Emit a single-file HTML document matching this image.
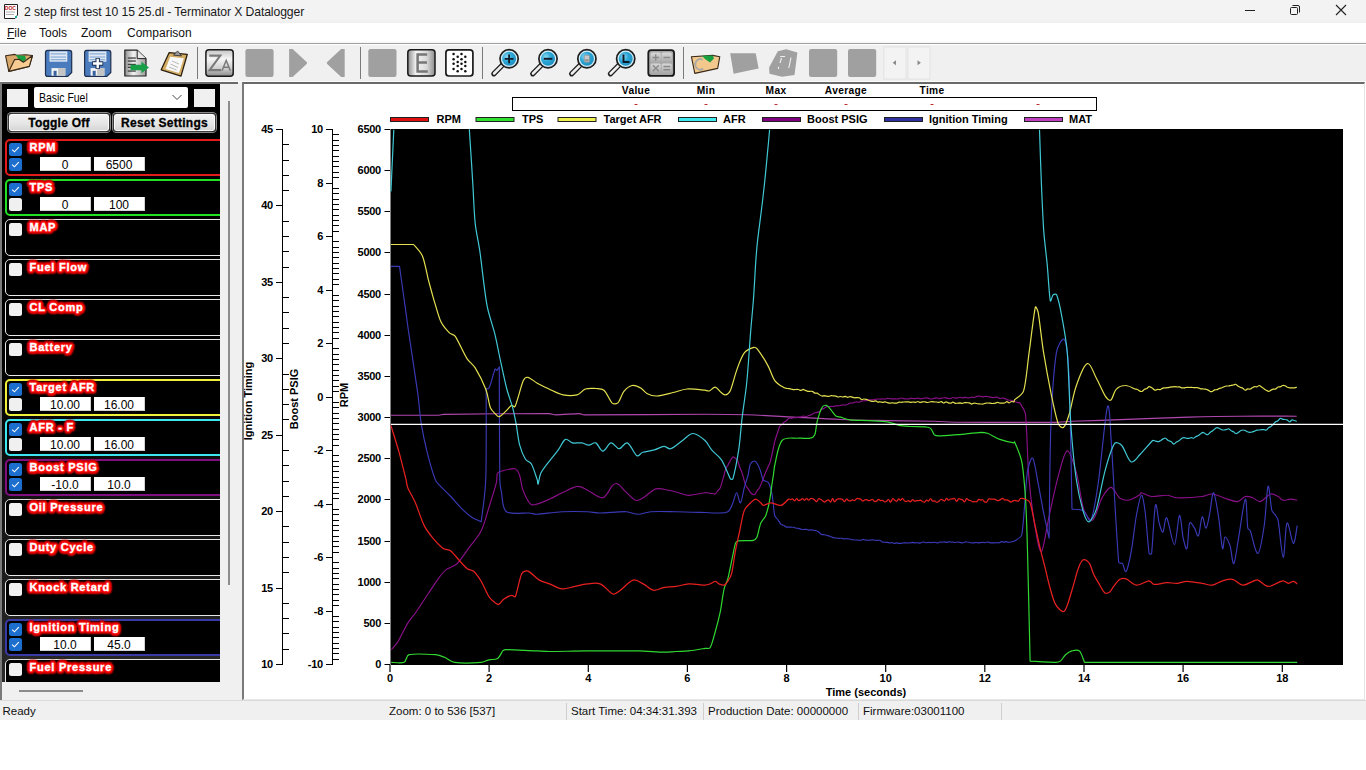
<!DOCTYPE html>
<html><head><meta charset="utf-8">
<style>
*{margin:0;padding:0;box-sizing:border-box}
html,body{width:1366px;height:770px;overflow:hidden;background:#fff;font-family:"Liberation Sans",sans-serif;}
.abs{position:absolute}
#title{position:absolute;left:0;top:0;width:1366px;height:23px;background:linear-gradient(#f3f3f3 80%,#efefef)}
#title .t{position:absolute;left:24px;top:5px;font-size:12.2px;color:#1a1a1a;letter-spacing:-0.1px;white-space:nowrap}
#menu{position:absolute;left:0;top:23px;width:1366px;height:20px;background:linear-gradient(#fff 88%,#f6f6f6)}
#menu span{position:absolute;top:3px;font-size:12px;color:#111}
#tb{position:absolute;left:0;top:43px;width:1366px;height:39px;background:#f0f0f0;border-top:1px solid #a0a0a0;border-bottom:1px solid #fbfbfb;box-shadow:inset 0 1px 0 #fff}
#lp{position:absolute;left:0;top:82px;width:242px;height:618px;background:#f0f0f0}
#lpb{position:absolute;left:0;top:0;width:238px;height:618px;border-top:2px solid #6a6a6a;border-left:2px solid #7a7a7a}
#blk{position:absolute;left:2px;top:2px;width:218px;height:598px;background:linear-gradient(#000 0%,#000 45%,#2a2a2a 100%);overflow:hidden}
.grp{position:absolute;left:5px;width:240px;height:37px;border-radius:5px;background:#000}
.cb{position:absolute;width:13px;height:13px;border-radius:2.5px;background:#f0f0f0}
.cb.on{background:#1c6fcf}
.cb svg{position:absolute;left:0;top:0}
.lbl{position:absolute;left:27.5px;font-weight:bold;font-size:11px;letter-spacing:0.75px;color:#fff;white-space:nowrap;padding:1px 2px;-webkit-text-stroke:0.35px #fff;text-shadow:1.20px 0.00px 0.6px #ff1010,1.04px 0.60px 0.6px #ff1010,0.60px 1.04px 0.6px #ff1010,0.00px 1.20px 0.6px #ff1010,-0.60px 1.04px 0.6px #ff1010,-1.04px 0.60px 0.6px #ff1010,-1.20px 0.00px 0.6px #ff1010,-1.04px -0.60px 0.6px #ff1010,-0.60px -1.04px 0.6px #ff1010,-0.00px -1.20px 0.6px #ff1010,0.60px -1.04px 0.6px #ff1010,1.04px -0.60px 0.6px #ff1010,2.20px 0.00px 1px #e80000,1.91px 1.10px 1px #e80000,1.10px 1.91px 1px #e80000,0.00px 2.20px 1px #e80000,-1.10px 1.91px 1px #e80000,-1.91px 1.10px 1px #e80000,-2.20px 0.00px 1px #e80000,-1.91px -1.10px 1px #e80000,-1.10px -1.91px 1px #e80000,-0.00px -2.20px 1px #e80000,1.10px -1.91px 1px #e80000,1.91px -1.10px 1px #e80000,3.00px 0.00px 1.5px #c00000,2.60px 1.50px 1.5px #c00000,1.50px 2.60px 1.5px #c00000,0.00px 3.00px 1.5px #c00000,-1.50px 2.60px 1.5px #c00000,-2.60px 1.50px 1.5px #c00000,-3.00px 0.00px 1.5px #c00000,-2.60px -1.50px 1.5px #c00000,-1.50px -2.60px 1.5px #c00000,-0.00px -3.00px 1.5px #c00000,1.50px -2.60px 1.5px #c00000,2.60px -1.50px 1.5px #c00000}
.inp{position:absolute;width:51px;height:14.5px;background:#fff;font-size:12px;text-align:center;line-height:17px;color:#000;
  border-bottom:1px solid #d0d0d0;border-right:1px solid #d0d0d0}
#cp{position:absolute;left:242px;top:82px;width:1123px;height:618px;background:#fff;border-top:2px solid #6a6a6a;border-left:2px solid #7a7a7a;border-right:1px solid #e4e4e4;border-bottom:1px solid #e8e8e8}
#status{position:absolute;left:0;top:700px;width:1366px;height:20px;background:#f0f0f0;border-top:1px solid #dadada}
#status span{position:absolute;top:4.2px;font-size:11.5px;color:#111;white-space:nowrap}
#status i{position:absolute;top:2px;width:1px;height:17px;background:#cfcfcf}
.btn{position:absolute;height:19px;border:1px solid #3a3a3a;border-radius:3.5px;background:linear-gradient(#f4f4f4,#e4e4e4 60%,#d4d4d4);
  font-weight:bold;font-size:12px;letter-spacing:0.25px;-webkit-text-stroke:0.3px #000;text-align:center;line-height:19px;color:#000;box-shadow:0 0 0 1px #8a8a8a,inset 0 0 0 1px #fafafa}
</style></head><body>
<div id="title">
 <svg class="abs" style="left:2px;top:3px" width="17" height="17" viewBox="0 0 17 17">
  <path d="M2.5 1.5 H15.5 V12 L13 15.5 H2.5 Z" fill="#fff" stroke="#222" stroke-width="1"/>
  <path d="M4 9 H13 M4 11.5 H12" stroke="#999" stroke-width="0.8"/>
  <text x="2.8" y="6.5" font-family="Liberation Sans" font-size="5" font-weight="bold" fill="#c01818">DOC</text>
  <rect x="13" y="13" width="2" height="2" fill="#2a9"/>
 </svg>
 <div class="t">2 step first test 10 15 25.dl - Terminator X Datalogger</div>
 <svg class="abs" style="left:1244px;top:4px" width="12" height="12"><path d="M1 6.5 H11" stroke="#222" stroke-width="1"/></svg>
 <svg class="abs" style="left:1289px;top:4px" width="12" height="12"><path d="M3.5 1.5 H9 Q10.5 1.5 10.5 3 V8.5" fill="none" stroke="#222"/><rect x="1.5" y="3.5" width="7" height="7" rx="1" fill="none" stroke="#222"/></svg>
 <svg class="abs" style="left:1335px;top:4px" width="12" height="12"><path d="M1 1 L11 11 M11 1 L1 11" stroke="#222" stroke-width="1.1"/></svg>
</div>
<div id="menu">
 <span style="left:7px"><u>F</u>ile</span><span style="left:39px">Tools</span><span style="left:81px">Zoom</span><span style="left:127px">Comparison</span>
</div>
<div id="tb"></div>
<div id="lp">
 <div id="lpb"></div>
 <div id="blk">
  <div class="abs" style="left:5px;top:5px;width:21px;height:18px;background:#f0f0f0"></div>
  <div class="abs" style="left:32px;top:3px;width:154px;height:21px;background:#fff;border-radius:2px">
    <span class="abs" style="left:4.5px;top:4px;font-size:12px;color:#000;transform:scaleX(0.87);transform-origin:0 0;white-space:nowrap">Basic Fuel</span>
    <svg class="abs" style="left:138px;top:7px" width="10" height="7"><path d="M0.5 1 L5 5.5 L9.5 1" fill="none" stroke="#444" stroke-width="1"/></svg>
  </div>
  <div class="abs" style="left:192px;top:5px;width:21px;height:18px;background:#f0f0f0"></div>
  <div class="btn" style="left:6px;top:28.5px;width:102px">Toggle Off</div>
  <div class="btn" style="left:111px;top:28.5px;width:103px">Reset Settings</div>
  <div class="abs" style="left:0;top:0;width:218px;height:598px;">
   <div class="abs" style="left:-2px;top:-84px;width:240px;height:700px">
   <div class="grp" style="top:139px;border:2px solid #e41b1b;"></div>
<div class="cb on" style="left:9px;top:143.2px"><svg width="13" height="13" viewBox="0 0 13 13"><path d="M3.2 6.6 L5.4 8.8 L9.8 4.2" fill="none" stroke="#fff" stroke-width="1.1"/></svg></div>
<div class="cb on" style="left:9px;top:157.6px"><svg width="13" height="13" viewBox="0 0 13 13"><path d="M3.2 6.6 L5.4 8.8 L9.8 4.2" fill="none" stroke="#fff" stroke-width="1.1"/></svg></div>
<div class="lbl" style="top:139.5px">RPM</div>
<div class="inp" style="left:40px;top:156.5px">0</div>
<div class="inp" style="left:94px;top:156.5px">6500</div>
<div class="grp" style="top:179px;border:2px solid #22e022;"></div>
<div class="cb on" style="left:9px;top:183.2px"><svg width="13" height="13" viewBox="0 0 13 13"><path d="M3.2 6.6 L5.4 8.8 L9.8 4.2" fill="none" stroke="#fff" stroke-width="1.1"/></svg></div>
<div class="cb" style="left:9px;top:197.6px"></div>
<div class="lbl" style="top:179.5px">TPS</div>
<div class="inp" style="left:40px;top:196.5px">0</div>
<div class="inp" style="left:94px;top:196.5px">100</div>
<div class="grp" style="top:219px;border:1px solid #e8e8e8;"></div>
<div class="cb" style="left:9px;top:223.2px"></div>
<div class="lbl" style="top:219.5px">MAP</div>
<div class="grp" style="top:259px;border:1px solid #e8e8e8;"></div>
<div class="cb" style="left:9px;top:263.2px"></div>
<div class="lbl" style="top:259.5px">Fuel Flow</div>
<div class="grp" style="top:299px;border:1px solid #e8e8e8;"></div>
<div class="cb" style="left:9px;top:303.2px"></div>
<div class="lbl" style="top:299.5px">CL Comp</div>
<div class="grp" style="top:339px;border:1px solid #e8e8e8;"></div>
<div class="cb" style="left:9px;top:343.2px"></div>
<div class="lbl" style="top:339.5px">Battery</div>
<div class="grp" style="top:379px;border:2px solid #f2ef3a;"></div>
<div class="cb on" style="left:9px;top:383.2px"><svg width="13" height="13" viewBox="0 0 13 13"><path d="M3.2 6.6 L5.4 8.8 L9.8 4.2" fill="none" stroke="#fff" stroke-width="1.1"/></svg></div>
<div class="cb" style="left:9px;top:397.6px"></div>
<div class="lbl" style="top:379.5px">Target AFR</div>
<div class="inp" style="left:40px;top:396.5px">10.00</div>
<div class="inp" style="left:94px;top:396.5px">16.00</div>
<div class="grp" style="top:419px;border:2px solid #3ee6f0;"></div>
<div class="cb on" style="left:9px;top:423.2px"><svg width="13" height="13" viewBox="0 0 13 13"><path d="M3.2 6.6 L5.4 8.8 L9.8 4.2" fill="none" stroke="#fff" stroke-width="1.1"/></svg></div>
<div class="cb" style="left:9px;top:437.6px"></div>
<div class="lbl" style="top:419.5px">AFR - F</div>
<div class="inp" style="left:40px;top:436.5px">10.00</div>
<div class="inp" style="left:94px;top:436.5px">16.00</div>
<div class="grp" style="top:459px;border:2px solid #801080;"></div>
<div class="cb on" style="left:9px;top:463.2px"><svg width="13" height="13" viewBox="0 0 13 13"><path d="M3.2 6.6 L5.4 8.8 L9.8 4.2" fill="none" stroke="#fff" stroke-width="1.1"/></svg></div>
<div class="cb on" style="left:9px;top:477.6px"><svg width="13" height="13" viewBox="0 0 13 13"><path d="M3.2 6.6 L5.4 8.8 L9.8 4.2" fill="none" stroke="#fff" stroke-width="1.1"/></svg></div>
<div class="lbl" style="top:459.5px">Boost PSIG</div>
<div class="inp" style="left:40px;top:476.5px">-10.0</div>
<div class="inp" style="left:94px;top:476.5px">10.0</div>
<div class="grp" style="top:499px;border:1px solid #e8e8e8;"></div>
<div class="cb" style="left:9px;top:503.2px"></div>
<div class="lbl" style="top:499.5px">Oil Pressure</div>
<div class="grp" style="top:539px;border:1px solid #e8e8e8;"></div>
<div class="cb" style="left:9px;top:543.2px"></div>
<div class="lbl" style="top:539.5px">Duty Cycle</div>
<div class="grp" style="top:579px;border:1px solid #e8e8e8;"></div>
<div class="cb" style="left:9px;top:583.2px"></div>
<div class="lbl" style="top:579.5px">Knock Retard</div>
<div class="grp" style="top:619px;border:2px solid #3a3aa6;"></div>
<div class="cb on" style="left:9px;top:623.2px"><svg width="13" height="13" viewBox="0 0 13 13"><path d="M3.2 6.6 L5.4 8.8 L9.8 4.2" fill="none" stroke="#fff" stroke-width="1.1"/></svg></div>
<div class="cb on" style="left:9px;top:637.6px"><svg width="13" height="13" viewBox="0 0 13 13"><path d="M3.2 6.6 L5.4 8.8 L9.8 4.2" fill="none" stroke="#fff" stroke-width="1.1"/></svg></div>
<div class="lbl" style="top:619.5px">Ignition Timing</div>
<div class="inp" style="left:40px;top:636.5px">10.0</div>
<div class="inp" style="left:94px;top:636.5px">45.0</div>
<div class="grp" style="top:659px;border:1px solid #e8e8e8;"></div>
<div class="cb" style="left:9px;top:663.2px"></div>
<div class="lbl" style="top:659.5px">Fuel Pressure</div>
   </div>
  </div>
 </div>
 <div class="abs" style="left:228px;top:19px;width:2px;height:484px;background:#8c8c8c"></div>
 <div class="abs" style="left:19px;top:608px;width:64px;height:2px;background:#8c8c8c"></div>
</div>
<div id="cp"></div>
<svg class="abs" style="left:0;top:0" width="1366" height="83" viewBox="0 0 1366 83">
<defs>
<linearGradient id="gZA" x1="0" y1="0" x2="0" y2="1"><stop offset="0" stop-color="#c4c4c4"/><stop offset="0.35" stop-color="#f6f6f6"/><stop offset="0.7" stop-color="#d0d0d0"/><stop offset="1" stop-color="#8a8a8a"/></linearGradient>
<linearGradient id="gE" x1="0" y1="0" x2="1" y2="0"><stop offset="0" stop-color="#8c8c8c"/><stop offset="0.3" stop-color="#f4f4f4"/><stop offset="0.7" stop-color="#d8d8d8"/><stop offset="1" stop-color="#8c8c8c"/></linearGradient>
<linearGradient id="gDoc" x1="0" y1="0" x2="1" y2="0"><stop offset="0" stop-color="#8a8a8a"/><stop offset="0.4" stop-color="#f2f2f2"/><stop offset="1" stop-color="#9a9a9a"/></linearGradient>
<radialGradient id="gLens" cx="0.35" cy="0.35" r="0.7"><stop offset="0" stop-color="#8fd8f0"/><stop offset="0.5" stop-color="#2aa6d6"/><stop offset="1" stop-color="#1d8fc0"/></radialGradient>
<linearGradient id="gCalc" x1="0" y1="0" x2="0" y2="1"><stop offset="0" stop-color="#d8d8d8"/><stop offset="1" stop-color="#a8a8a8"/></linearGradient>
</defs>
<rect x="197.0" y="47" width="1" height="32" fill="#7a7a7a"/>
<rect x="360.0" y="47" width="1" height="32" fill="#7a7a7a"/>
<rect x="482.0" y="47" width="1" height="32" fill="#7a7a7a"/>
<rect x="683.0" y="47" width="1" height="32" fill="#7a7a7a"/>
<path d="M5.6 55.8 L14.9 54.4 L16.7 55.2 L25.8 54.7 L32.5 55.5 L29.3 66.4 L8.8 71.4 Z" fill="#d9a86c" stroke="#3a2a18" stroke-width="1.1" stroke-linejoin="round"/>
<path d="M15.8 55 L25.2 56.1 L26 59 L23.4 62.3 L18.7 59.6 Z" fill="#18a040"/>
<path d="M8.8 71.4 L14.6 59.6 L19 59.2 L23.4 62.3 L32.5 55.5 L29.3 66.4 Z" fill="#f6cc92" stroke="#3a2a18" stroke-width="1.1" stroke-linejoin="round"/>
<path d="M47.6 50.3 H69.4 Q71.7 50.3 71.7 52.6 V72.5 L67.7 76.4 H47.6 Q45.5 76.4 45.5 74.2 V52.6 Q45.5 50.3 47.6 50.3 Z" fill="#4a7bbd" stroke="#1e2f4e" stroke-width="1.2"/>
<rect x="49.5" y="51.4" width="17.8" height="10.3" fill="#dfe9f4"/>
<rect x="50.6" y="53.199999999999996" width="15.5" height="1.3" fill="#8fb0d8"/>
<rect x="50.6" y="56.4" width="15.5" height="1.3" fill="#8fb0d8"/>
<rect x="50.6" y="59.0" width="15.5" height="1.3" fill="#8fb0d8"/>
<rect x="51.5" y="68.1" width="13.8" height="7.6" fill="#f4f4f4"/>
<rect x="58.1" y="68.1" width="7.2" height="7.6" fill="#c4c4c4"/>
<rect x="53.6" y="70.8" width="3" height="5" fill="#3a62a0"/>
<path d="M86.7 50.3 H108.5 Q110.80000000000001 50.3 110.80000000000001 52.6 V72.5 L106.80000000000001 76.4 H86.7 Q84.60000000000001 76.4 84.60000000000001 74.2 V52.6 Q84.60000000000001 50.3 86.7 50.3 Z" fill="#4a7bbd" stroke="#1e2f4e" stroke-width="1.2"/>
<rect x="88.60000000000001" y="51.4" width="17.8" height="10.3" fill="#dfe9f4"/>
<rect x="89.7" y="53.199999999999996" width="15.5" height="1.3" fill="#8fb0d8"/>
<rect x="89.7" y="56.4" width="15.5" height="1.3" fill="#8fb0d8"/>
<rect x="89.7" y="59.0" width="15.5" height="1.3" fill="#8fb0d8"/>
<rect x="90.60000000000001" y="68.1" width="13.8" height="7.6" fill="#f4f4f4"/>
<rect x="97.2" y="68.1" width="7.2" height="7.6" fill="#c4c4c4"/>
<rect x="92.7" y="70.8" width="3" height="5" fill="#3a62a0"/>
<path d="M92.2 63.5 H103.2 M97.7 58.0 V69.0" stroke="#1e2f4e" stroke-width="4.4"/>
<path d="M93.0 63.5 H102.4 M97.7 58.8 V68.2" stroke="#fff" stroke-width="2.4"/>
<path d="M124.8 50.2 H137.2 L146 58.6 V76 H124.8 Z" fill="url(#gDoc)" stroke="#222" stroke-width="1.2" stroke-linejoin="round"/>
<path d="M137.2 50.2 V58.6 H146" fill="#e8e8e8" stroke="#222" stroke-width="1"/>
<rect x="127.8" y="57.4" width="8" height="1.3" fill="#404040"/>
<rect x="127.8" y="60.4" width="8" height="1.3" fill="#404040"/>
<rect x="127.8" y="63.800000000000004" width="8" height="1.3" fill="#404040"/>
<rect x="127.8" y="66.7" width="8" height="1.3" fill="#404040"/>
<rect x="127.8" y="70.4" width="8" height="1.3" fill="#404040"/>
<path d="M130.5 64.8 H141.4 V61.8 L149 67.5 L141.4 73.2 V70.3 H130.5 Z" fill="#18a048"/>
<path d="M169.2 52.6 L187.3 54.3 L181 76.1 L161.2 69.8 Z" fill="#d4ac64" stroke="#2a2010" stroke-width="1.3" stroke-linejoin="round"/>
<path d="M170.2 56.8 L183.8 58.3 L179 73 L165.6 69 Z" fill="#f8f8f8"/>
<path d="M172 61 L179 64 M170.5 64 L178 67.5 M169 67 L176.5 70" stroke="#b8b8b8" stroke-width="1"/>
<path d="M173.5 55.2 L177.6 50.9 L181.5 55.9 Z" fill="#9a9a9a" stroke="#2a2a2a" stroke-width="0.8"/>
<rect x="205.9" y="49.7" width="27.3" height="26.5" rx="3" fill="url(#gZA)" stroke="#1a1a1a" stroke-width="1.5"/>
<path d="M209.3 55.6 H220.3 L209.6 70.1 H221" fill="none" stroke="#7a7a7a" stroke-width="2.1" stroke-linejoin="miter"/>
<path d="M222 70.8 L226.2 60.5 L230.4 70.8 M223.6 67.2 H228.8" fill="none" stroke="#7a7a7a" stroke-width="1.5"/>
<rect x="245.4" y="49.1" width="28.2" height="27.8" rx="2.2" fill="#a0a0a0"/>
<rect x="368.3" y="49.1" width="28.2" height="27.8" rx="2.2" fill="#a0a0a0"/>
<rect x="809" y="49.1" width="28.2" height="27.8" rx="2.2" fill="#a0a0a0"/>
<rect x="848" y="49.1" width="28.2" height="27.8" rx="2.2" fill="#a0a0a0"/>
<path d="M289.1 49.1 H292.6 L306.9 62.3 V63.7 L292.6 76.9 H289.1 Z" fill="#a0a0a0"/>
<path d="M344.7 49.1 H341.2 L326.9 62.3 V63.7 L341.2 76.9 H344.7 Z" fill="#a0a0a0"/>
<rect x="407.8" y="49.8" width="27.2" height="26.2" rx="3" fill="url(#gE)" stroke="#1a1a1a" stroke-width="1.5"/>
<path d="M427.2 54.6 H417.6 V71.6 H427.8 M417.6 62.4 H427" fill="none" stroke="#777" stroke-width="2.5"/>
<rect x="445.9" y="49.8" width="27" height="26.2" rx="3" fill="#fff" stroke="#1a1a1a" stroke-width="1.7"/>
<circle cx="453.59" cy="54.08" r="1.25" fill="#111"/>
<circle cx="461.49" cy="54.08" r="1.25" fill="#111"/>
<circle cx="457.69" cy="56.71" r="1.25" fill="#111"/>
<circle cx="465.30" cy="56.71" r="1.25" fill="#111"/>
<circle cx="453.59" cy="59.35" r="1.25" fill="#111"/>
<circle cx="461.49" cy="59.35" r="1.25" fill="#111"/>
<circle cx="457.69" cy="61.98" r="1.25" fill="#111"/>
<circle cx="465.30" cy="61.98" r="1.25" fill="#111"/>
<circle cx="453.59" cy="63.74" r="1.25" fill="#111"/>
<circle cx="461.49" cy="63.74" r="1.25" fill="#111"/>
<circle cx="457.69" cy="66.08" r="1.25" fill="#111"/>
<circle cx="465.30" cy="66.08" r="1.25" fill="#111"/>
<circle cx="453.59" cy="69.01" r="1.25" fill="#111"/>
<circle cx="461.49" cy="69.01" r="1.25" fill="#111"/>
<circle cx="457.69" cy="71.35" r="1.25" fill="#111"/>
<circle cx="465.30" cy="71.35" r="1.25" fill="#111"/>
<path d="M502.5 65.0 L493.8 73.8" stroke="#1e1e1e" stroke-width="5.2" stroke-linecap="round"/>
<path d="M502.20000000000005 65.3 L494.1 73.5" stroke="#f0f0f0" stroke-width="2.6" stroke-linecap="round"/>
<circle cx="509.1" cy="58.8" r="9.1" fill="#d6eef8" stroke="#1e1e1e" stroke-width="1.7"/>
<circle cx="509.1" cy="58.8" r="7" fill="url(#gLens)"/>
<path d="M504.70000000000005 58.8 H513.5 M509.1 54.599999999999994 V63.199999999999996" stroke="#0e1a28" stroke-width="1.8"/>
<path d="M541.4 65.0 L532.7 73.8" stroke="#1e1e1e" stroke-width="5.2" stroke-linecap="round"/>
<path d="M541.1 65.3 L533 73.5" stroke="#f0f0f0" stroke-width="2.6" stroke-linecap="round"/>
<circle cx="548" cy="58.8" r="9.1" fill="#d6eef8" stroke="#1e1e1e" stroke-width="1.7"/>
<circle cx="548" cy="58.8" r="7" fill="url(#gLens)"/>
<path d="M543.8 58.8 H552.4" stroke="#0e1a28" stroke-width="1.9"/>
<path d="M580.3 65.0 L571.6 73.8" stroke="#1e1e1e" stroke-width="5.2" stroke-linecap="round"/>
<path d="M580.0 65.3 L571.9 73.5" stroke="#f0f0f0" stroke-width="2.6" stroke-linecap="round"/>
<circle cx="586.9" cy="58.8" r="9.1" fill="#d6eef8" stroke="#1e1e1e" stroke-width="1.7"/>
<circle cx="586.9" cy="58.8" r="7" fill="url(#gLens)"/>
<rect x="584.3" y="55.199999999999996" width="5.2" height="7" rx="1" fill="#c8c8c8" stroke="#888" stroke-width="0.6"/>
<rect x="585.1" y="59.3" width="3.6" height="2" fill="#909090"/>
<path d="M619.1 65.0 L610.4000000000001 73.8" stroke="#1e1e1e" stroke-width="5.2" stroke-linecap="round"/>
<path d="M618.8000000000001 65.3 L610.7 73.5" stroke="#f0f0f0" stroke-width="2.6" stroke-linecap="round"/>
<circle cx="625.7" cy="58.8" r="9.1" fill="#d6eef8" stroke="#1e1e1e" stroke-width="1.7"/>
<circle cx="625.7" cy="58.8" r="7" fill="url(#gLens)"/>
<path d="M623.5 54.4 V62.0 H629.5" fill="none" stroke="#0e1a28" stroke-width="1.9"/>
<rect x="648.3" y="50.1" width="25.8" height="25.8" rx="3" fill="#a8a8a8" stroke="#1a1a1a" stroke-width="1.8"/>
<rect x="650.6" y="52.4" width="10.2" height="10.2" rx="1.6" fill="url(#gCalc)"/>
<rect x="661.6" y="52.4" width="10.2" height="10.2" rx="1.6" fill="url(#gCalc)"/>
<rect x="650.6" y="63.4" width="10.2" height="10.2" rx="1.6" fill="url(#gCalc)"/>
<rect x="661.6" y="63.4" width="10.2" height="10.2" rx="1.6" fill="url(#gCalc)"/>
<path d="M652.5 57.5 H659 M655.7 54.3 V60.7 M663.5 57.5 H670.2 M652.8 65.3 L658.8 71.3 M658.8 65.3 L652.8 71.3 M663.5 66.5 H670.2 M663.5 69.8 H670.2" stroke="#8a8a8a" stroke-width="1.4"/>
<path d="M691.4 56.7 L712.7 55.4 L719.8 56.7 L717.7 68.4 L694.8 73.4 Z" fill="#f2c88c" stroke="#3a2a18" stroke-width="1.1" stroke-linejoin="round"/>
<path d="M702 55.8 L712.7 55.4 L714 58.5 L710 62.5 L705 59 Z" fill="#18a040"/>
<path d="M702.5 59.8 A4.6 5.4 0 1 0 703 68.5" fill="none" stroke="#a8a8a8" stroke-width="1.8"/>
<path d="M730.2 53.3 L755.7 53.3 L758.6 68.4 L733.6 73.8 Z" fill="#a0a0a0"/>
<path d="M777.8 51.3 L786.2 49.2 L797.4 52.5 L794.5 75 L782 76.7 L769.5 73.8 L769.1 67.5 Z" fill="#a0a0a0"/>
<path d="M780.3 56.5 H785 M791 57.5 L788.8 68 M778.5 66.8 V69 M781.5 58 L780 63" stroke="#f0f0f0" stroke-width="1.1"/>
<rect x="883.8" y="46.9" width="22.2" height="32.2" fill="#f3f3f3" stroke="#e2e2e2" stroke-width="1"/>
<rect x="907.8" y="46.9" width="22.2" height="32.2" fill="#f3f3f3" stroke="#e2e2e2" stroke-width="1"/>
<path d="M896 60.2 V65.2 L892.6 62.7 Z" fill="#8a8a8a"/>
<path d="M917.5 60.2 V65.2 L920.9 62.7 Z" fill="#8a8a8a"/>
</svg>
<svg class="abs" style="left:244px;top:84px" width="1119" height="616" viewBox="244 84 1119 616">
<rect x="390.5" y="129" width="952.5" height="536" fill="#000"/>
<line x1="282.5" y1="129" x2="282.5" y2="665" stroke="#000" stroke-width="1"/>
<line x1="276" y1="664.5" x2="282.5" y2="664.5" stroke="#000" stroke-width="1"/>
<text x="273" y="667.7" text-anchor="end" letter-spacing="-0.25" font-family="Liberation Sans" font-weight="bold" font-size="11" fill="#000">10</text>
<line x1="282.5" y1="649.5" x2="289" y2="649.5" stroke="#000" stroke-width="1"/>
<line x1="282.5" y1="633.5" x2="289" y2="633.5" stroke="#000" stroke-width="1"/>
<line x1="282.5" y1="618.5" x2="289" y2="618.5" stroke="#000" stroke-width="1"/>
<line x1="282.5" y1="603.5" x2="289" y2="603.5" stroke="#000" stroke-width="1"/>
<line x1="276" y1="588.5" x2="282.5" y2="588.5" stroke="#000" stroke-width="1"/>
<text x="273" y="591.7" text-anchor="end" letter-spacing="-0.25" font-family="Liberation Sans" font-weight="bold" font-size="11" fill="#000">15</text>
<line x1="282.5" y1="572.5" x2="289" y2="572.5" stroke="#000" stroke-width="1"/>
<line x1="282.5" y1="557.5" x2="289" y2="557.5" stroke="#000" stroke-width="1"/>
<line x1="282.5" y1="542.5" x2="289" y2="542.5" stroke="#000" stroke-width="1"/>
<line x1="282.5" y1="526.5" x2="289" y2="526.5" stroke="#000" stroke-width="1"/>
<line x1="276" y1="511.5" x2="282.5" y2="511.5" stroke="#000" stroke-width="1"/>
<text x="273" y="514.7" text-anchor="end" letter-spacing="-0.25" font-family="Liberation Sans" font-weight="bold" font-size="11" fill="#000">20</text>
<line x1="282.5" y1="496.5" x2="289" y2="496.5" stroke="#000" stroke-width="1"/>
<line x1="282.5" y1="481.5" x2="289" y2="481.5" stroke="#000" stroke-width="1"/>
<line x1="282.5" y1="465.5" x2="289" y2="465.5" stroke="#000" stroke-width="1"/>
<line x1="282.5" y1="450.5" x2="289" y2="450.5" stroke="#000" stroke-width="1"/>
<line x1="276" y1="435.5" x2="282.5" y2="435.5" stroke="#000" stroke-width="1"/>
<text x="273" y="438.7" text-anchor="end" letter-spacing="-0.25" font-family="Liberation Sans" font-weight="bold" font-size="11" fill="#000">25</text>
<line x1="282.5" y1="419.5" x2="289" y2="419.5" stroke="#000" stroke-width="1"/>
<line x1="282.5" y1="404.5" x2="289" y2="404.5" stroke="#000" stroke-width="1"/>
<line x1="282.5" y1="389.5" x2="289" y2="389.5" stroke="#000" stroke-width="1"/>
<line x1="282.5" y1="374.5" x2="289" y2="374.5" stroke="#000" stroke-width="1"/>
<line x1="276" y1="358.5" x2="282.5" y2="358.5" stroke="#000" stroke-width="1"/>
<text x="273" y="361.7" text-anchor="end" letter-spacing="-0.25" font-family="Liberation Sans" font-weight="bold" font-size="11" fill="#000">30</text>
<line x1="282.5" y1="343.5" x2="289" y2="343.5" stroke="#000" stroke-width="1"/>
<line x1="282.5" y1="328.5" x2="289" y2="328.5" stroke="#000" stroke-width="1"/>
<line x1="282.5" y1="312.5" x2="289" y2="312.5" stroke="#000" stroke-width="1"/>
<line x1="282.5" y1="297.5" x2="289" y2="297.5" stroke="#000" stroke-width="1"/>
<line x1="276" y1="282.5" x2="282.5" y2="282.5" stroke="#000" stroke-width="1"/>
<text x="273" y="285.7" text-anchor="end" letter-spacing="-0.25" font-family="Liberation Sans" font-weight="bold" font-size="11" fill="#000">35</text>
<line x1="282.5" y1="267.5" x2="289" y2="267.5" stroke="#000" stroke-width="1"/>
<line x1="282.5" y1="251.5" x2="289" y2="251.5" stroke="#000" stroke-width="1"/>
<line x1="282.5" y1="236.5" x2="289" y2="236.5" stroke="#000" stroke-width="1"/>
<line x1="282.5" y1="221.5" x2="289" y2="221.5" stroke="#000" stroke-width="1"/>
<line x1="276" y1="205.5" x2="282.5" y2="205.5" stroke="#000" stroke-width="1"/>
<text x="273" y="208.7" text-anchor="end" letter-spacing="-0.25" font-family="Liberation Sans" font-weight="bold" font-size="11" fill="#000">40</text>
<line x1="282.5" y1="190.5" x2="289" y2="190.5" stroke="#000" stroke-width="1"/>
<line x1="282.5" y1="175.5" x2="289" y2="175.5" stroke="#000" stroke-width="1"/>
<line x1="282.5" y1="160.5" x2="289" y2="160.5" stroke="#000" stroke-width="1"/>
<line x1="282.5" y1="144.5" x2="289" y2="144.5" stroke="#000" stroke-width="1"/>
<line x1="276" y1="129.5" x2="282.5" y2="129.5" stroke="#000" stroke-width="1"/>
<text x="273" y="132.7" text-anchor="end" letter-spacing="-0.25" font-family="Liberation Sans" font-weight="bold" font-size="11" fill="#000">45</text>
<line x1="332.5" y1="129" x2="332.5" y2="665" stroke="#000" stroke-width="1"/>
<line x1="326" y1="664.5" x2="332.5" y2="664.5" stroke="#000" stroke-width="1"/>
<text x="323" y="667.7" text-anchor="end" letter-spacing="-0.25" font-family="Liberation Sans" font-weight="bold" font-size="11" fill="#000">-10</text>
<line x1="332.5" y1="659.5" x2="339" y2="659.5" stroke="#000" stroke-width="1"/>
<line x1="332.5" y1="653.5" x2="339" y2="653.5" stroke="#000" stroke-width="1"/>
<line x1="332.5" y1="648.5" x2="339" y2="648.5" stroke="#000" stroke-width="1"/>
<line x1="332.5" y1="643.5" x2="339" y2="643.5" stroke="#000" stroke-width="1"/>
<line x1="332.5" y1="637.5" x2="339" y2="637.5" stroke="#000" stroke-width="1"/>
<line x1="332.5" y1="632.5" x2="339" y2="632.5" stroke="#000" stroke-width="1"/>
<line x1="332.5" y1="627.5" x2="339" y2="627.5" stroke="#000" stroke-width="1"/>
<line x1="332.5" y1="621.5" x2="339" y2="621.5" stroke="#000" stroke-width="1"/>
<line x1="332.5" y1="616.5" x2="339" y2="616.5" stroke="#000" stroke-width="1"/>
<line x1="326" y1="611.5" x2="332.5" y2="611.5" stroke="#000" stroke-width="1"/>
<text x="323" y="614.7" text-anchor="end" letter-spacing="-0.25" font-family="Liberation Sans" font-weight="bold" font-size="11" fill="#000">-8</text>
<line x1="332.5" y1="605.5" x2="339" y2="605.5" stroke="#000" stroke-width="1"/>
<line x1="332.5" y1="600.5" x2="339" y2="600.5" stroke="#000" stroke-width="1"/>
<line x1="332.5" y1="594.5" x2="339" y2="594.5" stroke="#000" stroke-width="1"/>
<line x1="332.5" y1="589.5" x2="339" y2="589.5" stroke="#000" stroke-width="1"/>
<line x1="332.5" y1="584.5" x2="339" y2="584.5" stroke="#000" stroke-width="1"/>
<line x1="332.5" y1="578.5" x2="339" y2="578.5" stroke="#000" stroke-width="1"/>
<line x1="332.5" y1="573.5" x2="339" y2="573.5" stroke="#000" stroke-width="1"/>
<line x1="332.5" y1="568.5" x2="339" y2="568.5" stroke="#000" stroke-width="1"/>
<line x1="332.5" y1="562.5" x2="339" y2="562.5" stroke="#000" stroke-width="1"/>
<line x1="326" y1="557.5" x2="332.5" y2="557.5" stroke="#000" stroke-width="1"/>
<text x="323" y="560.7" text-anchor="end" letter-spacing="-0.25" font-family="Liberation Sans" font-weight="bold" font-size="11" fill="#000">-6</text>
<line x1="332.5" y1="552.5" x2="339" y2="552.5" stroke="#000" stroke-width="1"/>
<line x1="332.5" y1="546.5" x2="339" y2="546.5" stroke="#000" stroke-width="1"/>
<line x1="332.5" y1="541.5" x2="339" y2="541.5" stroke="#000" stroke-width="1"/>
<line x1="332.5" y1="536.5" x2="339" y2="536.5" stroke="#000" stroke-width="1"/>
<line x1="332.5" y1="530.5" x2="339" y2="530.5" stroke="#000" stroke-width="1"/>
<line x1="332.5" y1="525.5" x2="339" y2="525.5" stroke="#000" stroke-width="1"/>
<line x1="332.5" y1="520.5" x2="339" y2="520.5" stroke="#000" stroke-width="1"/>
<line x1="332.5" y1="514.5" x2="339" y2="514.5" stroke="#000" stroke-width="1"/>
<line x1="332.5" y1="509.5" x2="339" y2="509.5" stroke="#000" stroke-width="1"/>
<line x1="326" y1="504.5" x2="332.5" y2="504.5" stroke="#000" stroke-width="1"/>
<text x="323" y="507.7" text-anchor="end" letter-spacing="-0.25" font-family="Liberation Sans" font-weight="bold" font-size="11" fill="#000">-4</text>
<line x1="332.5" y1="498.5" x2="339" y2="498.5" stroke="#000" stroke-width="1"/>
<line x1="332.5" y1="493.5" x2="339" y2="493.5" stroke="#000" stroke-width="1"/>
<line x1="332.5" y1="487.5" x2="339" y2="487.5" stroke="#000" stroke-width="1"/>
<line x1="332.5" y1="482.5" x2="339" y2="482.5" stroke="#000" stroke-width="1"/>
<line x1="332.5" y1="477.5" x2="339" y2="477.5" stroke="#000" stroke-width="1"/>
<line x1="332.5" y1="471.5" x2="339" y2="471.5" stroke="#000" stroke-width="1"/>
<line x1="332.5" y1="466.5" x2="339" y2="466.5" stroke="#000" stroke-width="1"/>
<line x1="332.5" y1="461.5" x2="339" y2="461.5" stroke="#000" stroke-width="1"/>
<line x1="332.5" y1="455.5" x2="339" y2="455.5" stroke="#000" stroke-width="1"/>
<line x1="326" y1="450.5" x2="332.5" y2="450.5" stroke="#000" stroke-width="1"/>
<text x="323" y="453.7" text-anchor="end" letter-spacing="-0.25" font-family="Liberation Sans" font-weight="bold" font-size="11" fill="#000">-2</text>
<line x1="332.5" y1="445.5" x2="339" y2="445.5" stroke="#000" stroke-width="1"/>
<line x1="332.5" y1="439.5" x2="339" y2="439.5" stroke="#000" stroke-width="1"/>
<line x1="332.5" y1="434.5" x2="339" y2="434.5" stroke="#000" stroke-width="1"/>
<line x1="332.5" y1="429.5" x2="339" y2="429.5" stroke="#000" stroke-width="1"/>
<line x1="332.5" y1="423.5" x2="339" y2="423.5" stroke="#000" stroke-width="1"/>
<line x1="332.5" y1="418.5" x2="339" y2="418.5" stroke="#000" stroke-width="1"/>
<line x1="332.5" y1="413.5" x2="339" y2="413.5" stroke="#000" stroke-width="1"/>
<line x1="332.5" y1="407.5" x2="339" y2="407.5" stroke="#000" stroke-width="1"/>
<line x1="332.5" y1="402.5" x2="339" y2="402.5" stroke="#000" stroke-width="1"/>
<line x1="326" y1="397.5" x2="332.5" y2="397.5" stroke="#000" stroke-width="1"/>
<text x="323" y="400.7" text-anchor="end" letter-spacing="-0.25" font-family="Liberation Sans" font-weight="bold" font-size="11" fill="#000">0</text>
<line x1="332.5" y1="391.5" x2="339" y2="391.5" stroke="#000" stroke-width="1"/>
<line x1="332.5" y1="386.5" x2="339" y2="386.5" stroke="#000" stroke-width="1"/>
<line x1="332.5" y1="380.5" x2="339" y2="380.5" stroke="#000" stroke-width="1"/>
<line x1="332.5" y1="375.5" x2="339" y2="375.5" stroke="#000" stroke-width="1"/>
<line x1="332.5" y1="370.5" x2="339" y2="370.5" stroke="#000" stroke-width="1"/>
<line x1="332.5" y1="364.5" x2="339" y2="364.5" stroke="#000" stroke-width="1"/>
<line x1="332.5" y1="359.5" x2="339" y2="359.5" stroke="#000" stroke-width="1"/>
<line x1="332.5" y1="354.5" x2="339" y2="354.5" stroke="#000" stroke-width="1"/>
<line x1="332.5" y1="348.5" x2="339" y2="348.5" stroke="#000" stroke-width="1"/>
<line x1="326" y1="343.5" x2="332.5" y2="343.5" stroke="#000" stroke-width="1"/>
<text x="323" y="346.7" text-anchor="end" letter-spacing="-0.25" font-family="Liberation Sans" font-weight="bold" font-size="11" fill="#000">2</text>
<line x1="332.5" y1="338.5" x2="339" y2="338.5" stroke="#000" stroke-width="1"/>
<line x1="332.5" y1="332.5" x2="339" y2="332.5" stroke="#000" stroke-width="1"/>
<line x1="332.5" y1="327.5" x2="339" y2="327.5" stroke="#000" stroke-width="1"/>
<line x1="332.5" y1="322.5" x2="339" y2="322.5" stroke="#000" stroke-width="1"/>
<line x1="332.5" y1="316.5" x2="339" y2="316.5" stroke="#000" stroke-width="1"/>
<line x1="332.5" y1="311.5" x2="339" y2="311.5" stroke="#000" stroke-width="1"/>
<line x1="332.5" y1="306.5" x2="339" y2="306.5" stroke="#000" stroke-width="1"/>
<line x1="332.5" y1="300.5" x2="339" y2="300.5" stroke="#000" stroke-width="1"/>
<line x1="332.5" y1="295.5" x2="339" y2="295.5" stroke="#000" stroke-width="1"/>
<line x1="326" y1="290.5" x2="332.5" y2="290.5" stroke="#000" stroke-width="1"/>
<text x="323" y="293.7" text-anchor="end" letter-spacing="-0.25" font-family="Liberation Sans" font-weight="bold" font-size="11" fill="#000">4</text>
<line x1="332.5" y1="284.5" x2="339" y2="284.5" stroke="#000" stroke-width="1"/>
<line x1="332.5" y1="279.5" x2="339" y2="279.5" stroke="#000" stroke-width="1"/>
<line x1="332.5" y1="273.5" x2="339" y2="273.5" stroke="#000" stroke-width="1"/>
<line x1="332.5" y1="268.5" x2="339" y2="268.5" stroke="#000" stroke-width="1"/>
<line x1="332.5" y1="263.5" x2="339" y2="263.5" stroke="#000" stroke-width="1"/>
<line x1="332.5" y1="257.5" x2="339" y2="257.5" stroke="#000" stroke-width="1"/>
<line x1="332.5" y1="252.5" x2="339" y2="252.5" stroke="#000" stroke-width="1"/>
<line x1="332.5" y1="247.5" x2="339" y2="247.5" stroke="#000" stroke-width="1"/>
<line x1="332.5" y1="241.5" x2="339" y2="241.5" stroke="#000" stroke-width="1"/>
<line x1="326" y1="236.5" x2="332.5" y2="236.5" stroke="#000" stroke-width="1"/>
<text x="323" y="239.7" text-anchor="end" letter-spacing="-0.25" font-family="Liberation Sans" font-weight="bold" font-size="11" fill="#000">6</text>
<line x1="332.5" y1="231.5" x2="339" y2="231.5" stroke="#000" stroke-width="1"/>
<line x1="332.5" y1="225.5" x2="339" y2="225.5" stroke="#000" stroke-width="1"/>
<line x1="332.5" y1="220.5" x2="339" y2="220.5" stroke="#000" stroke-width="1"/>
<line x1="332.5" y1="215.5" x2="339" y2="215.5" stroke="#000" stroke-width="1"/>
<line x1="332.5" y1="209.5" x2="339" y2="209.5" stroke="#000" stroke-width="1"/>
<line x1="332.5" y1="204.5" x2="339" y2="204.5" stroke="#000" stroke-width="1"/>
<line x1="332.5" y1="199.5" x2="339" y2="199.5" stroke="#000" stroke-width="1"/>
<line x1="332.5" y1="193.5" x2="339" y2="193.5" stroke="#000" stroke-width="1"/>
<line x1="332.5" y1="188.5" x2="339" y2="188.5" stroke="#000" stroke-width="1"/>
<line x1="326" y1="183.5" x2="332.5" y2="183.5" stroke="#000" stroke-width="1"/>
<text x="323" y="186.7" text-anchor="end" letter-spacing="-0.25" font-family="Liberation Sans" font-weight="bold" font-size="11" fill="#000">8</text>
<line x1="332.5" y1="177.5" x2="339" y2="177.5" stroke="#000" stroke-width="1"/>
<line x1="332.5" y1="172.5" x2="339" y2="172.5" stroke="#000" stroke-width="1"/>
<line x1="332.5" y1="166.5" x2="339" y2="166.5" stroke="#000" stroke-width="1"/>
<line x1="332.5" y1="161.5" x2="339" y2="161.5" stroke="#000" stroke-width="1"/>
<line x1="332.5" y1="156.5" x2="339" y2="156.5" stroke="#000" stroke-width="1"/>
<line x1="332.5" y1="150.5" x2="339" y2="150.5" stroke="#000" stroke-width="1"/>
<line x1="332.5" y1="145.5" x2="339" y2="145.5" stroke="#000" stroke-width="1"/>
<line x1="332.5" y1="140.5" x2="339" y2="140.5" stroke="#000" stroke-width="1"/>
<line x1="332.5" y1="134.5" x2="339" y2="134.5" stroke="#000" stroke-width="1"/>
<line x1="326" y1="129.5" x2="332.5" y2="129.5" stroke="#000" stroke-width="1"/>
<text x="323" y="132.7" text-anchor="end" letter-spacing="-0.25" font-family="Liberation Sans" font-weight="bold" font-size="11" fill="#000">10</text>
<line x1="384.5" y1="664.5" x2="390" y2="664.5" stroke="#000" stroke-width="1"/>
<text x="381" y="667.7" text-anchor="end" letter-spacing="-0.25" font-family="Liberation Sans" font-weight="bold" font-size="11" fill="#000">0</text>
<line x1="384.5" y1="623.5" x2="390" y2="623.5" stroke="#000" stroke-width="1"/>
<text x="381" y="626.7" text-anchor="end" letter-spacing="-0.25" font-family="Liberation Sans" font-weight="bold" font-size="11" fill="#000">500</text>
<line x1="384.5" y1="582.5" x2="390" y2="582.5" stroke="#000" stroke-width="1"/>
<text x="381" y="585.7" text-anchor="end" letter-spacing="-0.25" font-family="Liberation Sans" font-weight="bold" font-size="11" fill="#000">1000</text>
<line x1="384.5" y1="541.5" x2="390" y2="541.5" stroke="#000" stroke-width="1"/>
<text x="381" y="544.7" text-anchor="end" letter-spacing="-0.25" font-family="Liberation Sans" font-weight="bold" font-size="11" fill="#000">1500</text>
<line x1="384.5" y1="499.5" x2="390" y2="499.5" stroke="#000" stroke-width="1"/>
<text x="381" y="502.7" text-anchor="end" letter-spacing="-0.25" font-family="Liberation Sans" font-weight="bold" font-size="11" fill="#000">2000</text>
<line x1="384.5" y1="458.5" x2="390" y2="458.5" stroke="#000" stroke-width="1"/>
<text x="381" y="461.7" text-anchor="end" letter-spacing="-0.25" font-family="Liberation Sans" font-weight="bold" font-size="11" fill="#000">2500</text>
<line x1="384.5" y1="417.5" x2="390" y2="417.5" stroke="#000" stroke-width="1"/>
<text x="381" y="420.7" text-anchor="end" letter-spacing="-0.25" font-family="Liberation Sans" font-weight="bold" font-size="11" fill="#000">3000</text>
<line x1="384.5" y1="376.5" x2="390" y2="376.5" stroke="#000" stroke-width="1"/>
<text x="381" y="379.7" text-anchor="end" letter-spacing="-0.25" font-family="Liberation Sans" font-weight="bold" font-size="11" fill="#000">3500</text>
<line x1="384.5" y1="335.5" x2="390" y2="335.5" stroke="#000" stroke-width="1"/>
<text x="381" y="338.7" text-anchor="end" letter-spacing="-0.25" font-family="Liberation Sans" font-weight="bold" font-size="11" fill="#000">4000</text>
<line x1="384.5" y1="294.5" x2="390" y2="294.5" stroke="#000" stroke-width="1"/>
<text x="381" y="297.7" text-anchor="end" letter-spacing="-0.25" font-family="Liberation Sans" font-weight="bold" font-size="11" fill="#000">4500</text>
<line x1="384.5" y1="252.5" x2="390" y2="252.5" stroke="#000" stroke-width="1"/>
<text x="381" y="255.7" text-anchor="end" letter-spacing="-0.25" font-family="Liberation Sans" font-weight="bold" font-size="11" fill="#000">5000</text>
<line x1="384.5" y1="211.5" x2="390" y2="211.5" stroke="#000" stroke-width="1"/>
<text x="381" y="214.7" text-anchor="end" letter-spacing="-0.25" font-family="Liberation Sans" font-weight="bold" font-size="11" fill="#000">5500</text>
<line x1="384.5" y1="170.5" x2="390" y2="170.5" stroke="#000" stroke-width="1"/>
<text x="381" y="173.7" text-anchor="end" letter-spacing="-0.25" font-family="Liberation Sans" font-weight="bold" font-size="11" fill="#000">6000</text>
<line x1="384.5" y1="129.5" x2="390" y2="129.5" stroke="#000" stroke-width="1"/>
<text x="381" y="132.7" text-anchor="end" letter-spacing="-0.25" font-family="Liberation Sans" font-weight="bold" font-size="11" fill="#000">6500</text>
<line x1="390.0" y1="665" x2="390.0" y2="672" stroke="#000" stroke-width="1.2"/>
<text x="390.0" y="682" text-anchor="middle" font-family="Liberation Sans" font-weight="bold" font-size="11" fill="#000">0</text>
<line x1="489.1" y1="665" x2="489.1" y2="672" stroke="#000" stroke-width="1.2"/>
<text x="489.1" y="682" text-anchor="middle" font-family="Liberation Sans" font-weight="bold" font-size="11" fill="#000">2</text>
<line x1="588.3" y1="665" x2="588.3" y2="672" stroke="#000" stroke-width="1.2"/>
<text x="588.3" y="682" text-anchor="middle" font-family="Liberation Sans" font-weight="bold" font-size="11" fill="#000">4</text>
<line x1="687.4" y1="665" x2="687.4" y2="672" stroke="#000" stroke-width="1.2"/>
<text x="687.4" y="682" text-anchor="middle" font-family="Liberation Sans" font-weight="bold" font-size="11" fill="#000">6</text>
<line x1="786.6" y1="665" x2="786.6" y2="672" stroke="#000" stroke-width="1.2"/>
<text x="786.6" y="682" text-anchor="middle" font-family="Liberation Sans" font-weight="bold" font-size="11" fill="#000">8</text>
<line x1="885.7" y1="665" x2="885.7" y2="672" stroke="#000" stroke-width="1.2"/>
<text x="885.7" y="682" text-anchor="middle" font-family="Liberation Sans" font-weight="bold" font-size="11" fill="#000">10</text>
<line x1="984.8" y1="665" x2="984.8" y2="672" stroke="#000" stroke-width="1.2"/>
<text x="984.8" y="682" text-anchor="middle" font-family="Liberation Sans" font-weight="bold" font-size="11" fill="#000">12</text>
<line x1="1084.0" y1="665" x2="1084.0" y2="672" stroke="#000" stroke-width="1.2"/>
<text x="1084.0" y="682" text-anchor="middle" font-family="Liberation Sans" font-weight="bold" font-size="11" fill="#000">14</text>
<line x1="1183.1" y1="665" x2="1183.1" y2="672" stroke="#000" stroke-width="1.2"/>
<text x="1183.1" y="682" text-anchor="middle" font-family="Liberation Sans" font-weight="bold" font-size="11" fill="#000">16</text>
<line x1="1282.3" y1="665" x2="1282.3" y2="672" stroke="#000" stroke-width="1.2"/>
<text x="1282.3" y="682" text-anchor="middle" font-family="Liberation Sans" font-weight="bold" font-size="11" fill="#000">18</text>
<text x="866" y="696" text-anchor="middle" font-family="Liberation Sans" font-weight="bold" font-size="11" fill="#000">Time (seconds)</text>
<text transform="translate(252,401) rotate(-90)" text-anchor="middle" font-family="Liberation Sans" font-weight="bold" font-size="11" fill="#000">Ignition Timing</text>
<text transform="translate(298,399) rotate(-90)" text-anchor="middle" font-family="Liberation Sans" font-weight="bold" font-size="11" fill="#000">Boost PSIG</text>
<text transform="translate(348,395) rotate(-90)" text-anchor="middle" font-family="Liberation Sans" font-weight="bold" font-size="11" fill="#000">RPM</text>
<rect x="390.5" y="117.5" width="38" height="4" fill="#e01010" stroke="#202020" stroke-width="1"/>
<text x="436.5" y="123" font-family="Liberation Sans" font-weight="bold" font-size="11" fill="#000">RPM</text>
<rect x="476.0" y="117.5" width="38" height="4" fill="#30e030" stroke="#202020" stroke-width="1"/>
<text x="522" y="123" font-family="Liberation Sans" font-weight="bold" font-size="11" fill="#000">TPS</text>
<rect x="558.0" y="117.5" width="38" height="4" fill="#f0f050" stroke="#202020" stroke-width="1"/>
<text x="603.5" y="123" font-family="Liberation Sans" font-weight="bold" font-size="11" fill="#000">Target AFR</text>
<rect x="678.5" y="117.5" width="38" height="4" fill="#40e8f0" stroke="#202020" stroke-width="1"/>
<text x="723" y="123" font-family="Liberation Sans" font-weight="bold" font-size="11" fill="#000">AFR</text>
<rect x="762.5" y="117.5" width="38" height="4" fill="#800080" stroke="#202020" stroke-width="1"/>
<text x="807" y="123" font-family="Liberation Sans" font-weight="bold" font-size="11" fill="#000">Boost PSIG</text>
<rect x="884.5" y="117.5" width="38" height="4" fill="#3030a0" stroke="#202020" stroke-width="1"/>
<text x="929" y="123" font-family="Liberation Sans" font-weight="bold" font-size="11" fill="#000">Ignition Timing</text>
<rect x="1024.5" y="117.5" width="38" height="4" fill="#c040c0" stroke="#202020" stroke-width="1"/>
<text x="1069" y="123" font-family="Liberation Sans" font-weight="bold" font-size="11" fill="#000">MAT</text>
<rect x="512.5" y="97.5" width="584" height="13" fill="#fff" stroke="#000" stroke-width="1"/>
<text x="636" y="93.5" text-anchor="middle" font-family="Liberation Sans" font-weight="bold" font-size="10.2" letter-spacing="0.35" fill="#000">Value</text>
<text x="706" y="93.5" text-anchor="middle" font-family="Liberation Sans" font-weight="bold" font-size="10.2" letter-spacing="0.35" fill="#000">Min</text>
<text x="776" y="93.5" text-anchor="middle" font-family="Liberation Sans" font-weight="bold" font-size="10.2" letter-spacing="0.35" fill="#000">Max</text>
<text x="846" y="93.5" text-anchor="middle" font-family="Liberation Sans" font-weight="bold" font-size="10.2" letter-spacing="0.35" fill="#000">Average</text>
<text x="932" y="93.5" text-anchor="middle" font-family="Liberation Sans" font-weight="bold" font-size="10.2" letter-spacing="0.35" fill="#000">Time</text>
<rect x="634.5" y="104" width="3" height="1" fill="#c03030"/>
<rect x="704.5" y="104" width="3" height="1" fill="#c03030"/>
<rect x="774.5" y="104" width="3" height="1" fill="#c03030"/>
<rect x="844.5" y="104" width="3" height="1" fill="#c03030"/>
<rect x="930.5" y="104" width="3" height="1" fill="#c03030"/>
<rect x="1036.5" y="104" width="3" height="1" fill="#c03030"/>
<path d="M390.9,415.2 C398.9,415.2 430.1,415.4 438.9,415.2 C440.5,415.2 441.9,414.3 443.6,414.3 C461.9,414.0 530.2,413.5 549.0,413.6 C551.5,413.6 553.5,414.8 556.0,414.8 C561.1,414.8 574.7,413.6 579.4,413.6 C581.1,413.6 582.4,414.8 584.1,414.8 C605.0,414.9 677.9,414.3 705.0,414.3 C719.6,414.3 732.2,414.3 746.8,414.8 C761.6,415.2 778.1,416.3 793.7,417.1 C809.3,417.9 824.9,418.9 840.5,419.5 C856.2,420.1 871.8,420.3 887.4,420.6 C903.0,420.9 922.5,421.1 934.2,421.3 C942.4,421.5 949.5,422.2 957.7,422.3 C972.0,422.4 1003.3,422.3 1020.0,422.3 C1033.2,422.3 1049.1,422.4 1057.8,422.3 C1062.7,422.2 1066.9,421.5 1071.8,421.3 C1081.2,420.9 1099.3,420.5 1114.0,419.9 C1133.5,419.2 1167.9,417.7 1189.0,417.1 C1207.0,416.6 1222.5,416.3 1240.5,416.2 C1258.5,416.0 1287.4,416.2 1296.7,416.2" fill="none" stroke="#b048b0" stroke-width="1.15" stroke-linejoin="round"/>
<path d="M391.3,649.7 C392.4,648.4 395.8,645.0 397.7,642.1 C400.4,637.7 404.8,628.0 407.8,623.1 C410.1,619.3 412.8,616.6 415.4,613.0 C418.8,608.1 424.2,599.7 428.0,594.0 C431.6,588.7 435.2,582.8 438.2,578.8 C440.6,575.5 443.2,572.0 445.8,569.9 C448.0,568.0 451.2,567.4 453.4,566.1 C455.3,565.0 457.0,564.0 458.4,562.3 C460.9,559.4 465.0,553.3 468.5,548.4 C472.3,543.1 477.8,537.4 481.2,530.7 C484.6,523.9 486.3,515.9 488.8,507.9 C491.3,499.9 495.0,488.4 496.4,482.6 C497.2,479.4 496.5,475.3 497.4,473.3 C498.3,471.7 500.4,471.5 502.1,471.0 C505.1,470.2 512.1,467.9 515.0,468.7 C517.9,469.4 518.7,472.9 519.7,475.7 C521.0,479.3 521.2,485.5 523.0,490.2 C524.8,494.9 528.2,501.8 530.6,504.1 C532.1,505.7 534.8,504.7 536.9,504.1 C540.1,503.3 545.3,500.9 549.6,499.1 C553.8,497.2 557.7,494.8 562.2,492.7 C566.9,490.6 573.2,486.8 577.4,486.4 C581.2,486.0 584.1,488.6 587.5,490.2 C591.8,492.1 598.5,498.6 602.7,497.8 C606.9,496.9 610.3,487.4 612.8,485.1 C614.2,483.9 616.3,483.0 617.9,483.9 C620.0,484.9 622.8,488.9 625.5,491.5 C628.5,494.2 632.7,499.3 635.6,500.3 C638.3,501.3 640.8,499.2 643.2,497.8 C646.6,495.9 651.7,490.2 655.9,488.9 C660.1,487.7 664.7,489.6 668.5,490.2 C672.1,490.8 675.3,491.9 678.7,492.7 C682.0,493.6 685.1,495.3 688.8,495.3 C693.2,495.3 701.9,493.1 705.0,492.7 C705.9,492.6 706.7,492.6 707.5,492.7 C708.4,492.8 709.2,493.3 710.1,493.4 C710.9,493.5 711.8,493.4 712.6,493.5 C713.5,493.6 714.4,494.4 715.2,494.0 C716.0,493.6 716.9,492.0 717.7,490.9 C718.6,489.9 719.7,489.0 720.3,487.7 C721.3,485.0 723.1,478.2 724.1,475.0 C724.7,472.8 725.1,470.3 725.8,468.7 C726.3,467.2 727.4,466.3 728.1,464.9 C728.9,463.5 729.7,461.7 730.5,460.3 C731.2,459.1 732.0,457.3 732.8,456.9 C733.6,456.6 734.4,457.6 735.1,458.1 C735.9,458.7 737.0,459.4 737.5,460.5 C738.3,462.0 739.0,465.2 739.8,467.3 C740.6,469.4 741.5,471.2 742.2,473.3 C743.1,476.3 744.6,482.6 745.6,485.1 C746.1,486.5 747.3,487.4 748.1,488.6 C748.9,489.9 749.6,491.7 750.6,492.7 C751.7,493.7 753.4,495.1 754.4,494.7 C755.5,494.4 756.1,492.1 757.0,490.9 C757.8,489.7 758.8,488.9 759.5,487.7 C760.3,486.2 761.2,484.0 762.0,481.9 C762.9,479.8 763.7,477.3 764.6,475.0 C765.5,472.7 766.5,470.5 767.4,468.3 C768.4,466.1 769.5,464.1 770.3,461.6 C771.1,458.8 771.8,455.0 772.6,451.5 C773.4,448.0 774.2,443.5 775.0,440.5 C775.6,438.0 776.5,435.8 777.3,433.5 C778.1,431.1 778.9,428.0 779.6,426.5 C780.1,425.6 781.2,425.3 782.0,424.6 C782.8,423.9 783.5,422.7 784.3,422.0 C785.1,421.3 785.9,421.1 786.7,420.5 C787.5,419.9 788.2,418.6 789.0,418.3 C789.8,418.0 790.6,418.5 791.4,418.4 C792.1,418.4 792.9,417.9 793.7,417.7 C794.5,417.6 795.3,417.8 796.0,417.7 C796.8,417.6 797.6,417.2 798.4,417.1 C799.2,417.0 799.9,417.2 800.7,417.0 C801.5,416.9 802.3,416.1 803.1,416.0 C803.8,415.9 804.6,416.6 805.4,416.6 C806.2,416.5 807.0,416.2 807.8,416.0 C808.5,415.7 809.3,415.5 810.1,415.2 C810.9,414.9 811.7,414.4 812.4,414.0 C813.2,413.6 814.0,413.0 814.8,412.8 C815.6,412.5 816.3,412.7 817.1,412.4 C817.9,412.2 818.7,411.9 819.5,411.4 C820.2,410.9 821.0,410.0 821.8,409.5 C822.6,409.0 823.4,408.8 824.2,408.3 C824.9,407.8 825.7,406.8 826.5,406.6 C827.3,406.3 828.1,406.9 828.8,406.8 C829.6,406.8 830.4,406.5 831.2,406.4 C832.0,406.4 832.7,406.6 833.5,406.5 C834.3,406.4 835.1,405.8 835.9,405.7 C836.6,405.6 837.4,406.0 838.2,406.0 C839.0,405.9 839.8,405.6 840.5,405.4 C841.3,405.2 842.1,404.9 842.9,404.9 C843.7,404.8 844.5,405.1 845.2,405.0 C846.0,404.9 846.8,404.8 847.6,404.5 C848.4,404.1 849.1,403.3 849.9,403.1 C850.7,402.8 851.5,403.2 852.3,403.1 C853.0,402.9 853.8,402.4 854.6,402.2 C855.4,402.0 856.2,401.8 856.9,401.8 C857.7,401.8 858.5,402.3 859.3,402.2 C860.1,402.1 860.8,401.4 861.6,401.1 C862.4,400.9 863.2,400.8 864.0,400.7 C864.8,400.6 865.5,400.7 866.3,400.6 C867.1,400.4 867.9,400.0 868.7,399.9 C869.4,399.8 870.2,399.9 871.0,399.9 C871.8,399.8 872.6,399.7 873.3,399.6 C874.1,399.4 874.9,399.3 875.7,399.2 C876.5,399.1 877.2,399.0 878.0,399.0 C878.8,399.0 879.6,399.1 880.4,399.1 C881.2,399.1 881.9,398.9 882.7,398.9 C883.5,398.9 884.3,399.1 885.1,399.1 C885.8,399.0 886.6,398.5 887.4,398.4 C888.2,398.3 889.0,398.5 889.7,398.6 C890.5,398.7 891.3,398.9 892.1,398.9 C892.9,398.9 893.6,398.8 894.4,398.8 C895.2,398.8 896.0,399.0 896.8,399.0 C897.5,398.9 898.3,398.8 899.1,398.6 C899.9,398.4 900.7,397.9 901.5,398.0 C902.2,398.0 903.0,398.7 903.8,398.8 C904.6,399.0 905.4,398.9 906.1,398.9 C906.9,399.0 907.7,399.0 908.5,398.9 C909.3,398.8 910.0,398.5 910.8,398.4 C911.6,398.3 912.4,398.4 913.2,398.5 C913.9,398.5 914.7,398.7 915.5,398.6 C916.3,398.6 917.1,398.0 917.8,398.0 C918.6,398.1 919.4,398.7 920.2,398.8 C921.0,398.9 921.8,398.6 922.5,398.5 C923.3,398.4 924.1,398.2 924.9,398.1 C925.7,398.0 926.4,397.7 927.2,397.9 C928.0,398.0 928.8,398.6 929.6,398.8 C930.3,399.0 931.1,399.0 931.9,399.0 C932.7,398.9 933.5,398.6 934.2,398.4 C935.0,398.2 935.8,397.8 936.6,397.8 C937.4,397.9 938.2,398.6 938.9,398.7 C939.7,398.7 940.5,398.3 941.3,398.1 C942.1,398.0 942.8,397.8 943.6,397.8 C944.4,397.7 945.2,397.8 946.0,397.9 C946.7,398.0 947.5,398.3 948.3,398.4 C949.1,398.5 949.9,398.7 950.6,398.5 C951.4,398.3 952.2,397.5 953.0,397.5 C953.8,397.4 954.5,398.0 955.3,398.1 C956.1,398.2 956.9,398.1 957.7,397.9 C958.5,397.8 959.2,397.2 960.0,397.2 C960.8,397.2 961.6,397.9 962.4,397.9 C963.1,397.9 963.9,397.3 964.7,397.3 C965.5,397.3 966.3,397.7 967.0,397.8 C967.8,397.9 968.6,397.9 969.4,397.8 C970.2,397.7 970.9,397.1 971.7,397.1 C972.5,397.0 973.3,397.6 974.1,397.5 C974.8,397.4 975.6,396.8 976.4,396.6 C977.2,396.3 978.0,396.2 978.8,396.1 C979.5,396.1 980.3,396.4 981.1,396.5 C981.9,396.6 982.7,396.8 983.4,396.8 C984.2,396.8 985.0,396.3 985.8,396.3 C986.6,396.3 987.3,396.6 988.1,396.7 C988.9,396.8 989.7,397.0 990.5,397.1 C991.2,397.3 992.0,397.6 992.8,397.6 C993.6,397.6 994.4,397.3 995.2,397.2 C995.9,397.2 996.7,397.1 997.5,397.3 C998.3,397.5 999.1,398.3 999.8,398.5 C1000.6,398.6 1001.4,398.0 1002.2,398.0 C1003.0,398.0 1003.8,398.1 1004.5,398.4 C1005.3,398.7 1006.0,399.3 1006.7,399.6 C1007.5,399.9 1008.2,400.1 1008.9,400.2 C1009.7,400.3 1010.4,400.1 1011.1,400.2 C1011.9,400.4 1012.6,400.8 1013.4,401.0 C1014.1,401.3 1014.8,401.5 1015.6,401.8 C1016.3,402.0 1017.0,402.4 1017.8,402.6 C1018.5,402.8 1019.6,402.4 1020.0,403.1 C1021.3,405.1 1024.9,410.1 1025.5,414.5 C1027.0,427.4 1027.3,460.0 1029.1,480.0 C1030.8,499.2 1034.2,522.7 1036.4,534.5 C1037.4,540.5 1039.7,553.9 1041.8,550.9 C1043.9,547.9 1046.4,528.4 1049.1,516.4 C1051.8,503.9 1055.2,487.3 1058.2,476.4 C1060.7,467.2 1064.2,451.5 1067.3,450.9 C1070.3,450.3 1074.1,464.8 1076.4,472.7 C1079.1,482.4 1080.9,501.2 1083.6,509.1 C1085.3,513.8 1089.7,521.8 1092.7,520.0 C1095.8,518.2 1098.8,503.6 1101.8,498.2 C1104.2,493.8 1107.9,487.3 1110.9,487.3 C1113.9,487.3 1117.0,496.1 1120.0,498.2 C1122.7,500.0 1125.9,500.6 1129.1,500.0 C1132.4,499.4 1137.9,495.8 1140.0,494.5 C1140.7,494.1 1140.7,492.6 1141.5,492.7 C1143.4,493.1 1147.8,496.1 1151.6,496.5 C1155.8,496.9 1162.6,495.0 1166.8,495.3 C1170.4,495.4 1173.2,497.7 1176.9,497.8 C1182.8,498.0 1196.3,497.2 1202.2,496.5 C1205.8,496.1 1208.7,493.6 1212.3,494.0 C1216.6,494.4 1223.3,497.8 1227.5,499.1 C1231.0,500.1 1234.7,502.0 1237.7,501.6 C1240.6,501.2 1242.7,497.2 1245.3,496.5 C1247.8,495.9 1250.3,496.9 1252.8,497.8 C1255.4,498.6 1257.5,502.2 1260.4,501.6 C1263.4,500.9 1267.6,494.8 1270.6,494.0 C1273.3,493.2 1276.1,495.5 1278.2,496.5 C1280.1,497.5 1281.1,499.9 1283.2,500.3 C1285.3,500.7 1288.5,499.1 1290.8,499.1 C1293.1,499.1 1296.1,500.1 1297.2,500.3" fill="none" stroke="#8a108a" stroke-width="1.15" stroke-linejoin="round"/>
<path d="M390.9,266.3 C392.3,266.3 398.1,266.3 399.5,266.3 C400.4,272.7 403.4,294.2 404.9,304.9 C406.2,313.8 407.1,321.5 408.4,330.5 C410.6,345.3 415.6,378.1 417.8,393.7 C419.3,404.3 419.7,414.4 421.3,424.2 C422.9,433.9 424.8,443.0 427.2,452.3 C429.5,461.6 433.3,474.4 435.4,479.9 C436.2,482.1 437.9,483.4 439.4,485.1 C442.0,487.9 447.2,492.7 450.8,496.5 C454.4,500.3 457.6,504.5 460.9,507.9 C464.3,511.2 467.7,514.5 471.1,516.8 C474.3,519.0 479.5,521.0 481.2,521.8 C482.0,514.8 485.2,494.7 485.7,479.9 C486.6,457.8 486.1,404.2 486.2,389.0 C486.7,388.8 488.8,388.9 489.2,387.8 C490.7,384.5 493.8,372.0 495.1,369.1 C495.4,368.4 496.3,370.6 497.0,370.3 C497.7,369.9 498.9,367.3 499.3,366.8 C499.4,385.6 499.4,458.9 499.8,479.9 C499.9,484.4 500.5,488.3 501.5,492.7 C502.6,498.0 501.9,508.3 506.5,511.7 C511.2,515.1 524.2,512.6 529.3,513.0 C532.0,513.2 534.2,514.3 536.9,514.2 C542.4,514.0 553.8,512.1 562.2,511.7 C570.7,511.3 581.2,511.5 587.5,511.7 C592.0,511.9 595.7,513.0 600.2,513.0 C606.5,513.0 619.2,511.5 625.5,511.7 C630.0,511.9 633.9,514.2 638.2,514.2 C642.4,514.2 646.3,512.0 650.8,511.7 C657.2,511.3 667.3,511.6 676.1,511.7 C685.2,511.8 698.5,512.3 705.0,512.5 C708.6,512.6 711.6,513.1 715.2,513.0 C719.0,512.8 724.9,513.4 727.8,511.7 C730.8,510.0 731.4,506.0 732.9,502.8 C734.4,499.7 735.4,492.7 736.7,492.7 C738.0,492.7 739.2,503.7 740.5,502.8 C741.8,502.0 743.0,492.3 744.3,487.7 C745.5,483.2 747.1,478.9 748.1,475.0 C749.1,471.2 749.2,466.3 750.4,464.0 C751.2,462.3 753.5,460.4 755.0,461.2 C756.6,461.9 758.5,465.8 759.7,468.7 C761.1,471.8 761.8,477.6 763.2,479.9 C764.3,481.6 767.3,480.8 768.4,482.6 C769.8,485.2 771.3,490.7 772.2,495.3 C773.2,500.7 773.7,511.4 774.7,515.5 C775.1,517.3 776.8,518.1 777.8,519.6 C778.9,521.1 780.1,523.4 781.0,524.4 C781.7,525.0 782.7,524.7 783.5,525.2 C784.4,525.6 785.2,526.6 786.1,526.9 C786.9,527.2 787.8,527.1 788.6,527.1 C789.5,527.1 790.3,527.1 791.1,527.1 C792.0,527.2 792.8,527.2 793.7,527.3 C794.5,527.5 795.4,528.0 796.2,528.2 C797.0,528.3 797.9,528.2 798.7,528.4 C799.6,528.6 800.4,529.1 801.3,529.3 C802.1,529.5 803.0,529.5 803.8,529.5 C804.6,529.5 805.5,529.3 806.3,529.4 C807.2,529.5 808.0,530.0 808.9,530.1 C809.7,530.1 810.5,529.7 811.4,529.7 C812.2,529.8 813.1,530.3 813.9,530.4 C814.8,530.6 815.6,530.4 816.5,530.7 C817.3,531.0 818.1,531.7 819.0,532.3 C819.8,533.0 820.7,534.1 821.5,534.5 C822.3,534.9 823.2,534.6 824.1,534.7 C824.9,534.9 825.7,535.1 826.6,535.3 C827.4,535.5 828.3,535.8 829.1,536.0 C830.0,536.3 830.8,536.7 831.6,537.0 C832.5,537.3 833.3,537.7 834.2,537.9 C835.0,538.0 835.9,538.0 836.7,538.1 C837.6,538.1 838.4,538.3 839.2,538.3 C840.1,538.4 840.9,538.2 841.8,538.3 C842.6,538.4 843.5,538.9 844.3,539.0 C845.1,539.0 846.0,538.5 846.8,538.6 C847.7,538.6 848.5,538.8 849.4,539.0 C850.2,539.2 851.1,539.4 851.9,539.6 C852.7,539.7 853.4,539.7 854.2,539.8 C855.0,539.8 855.7,539.9 856.5,540.0 C857.3,540.0 858.0,540.1 858.8,540.2 C859.6,540.2 860.3,540.4 861.1,540.3 C861.9,540.2 862.6,539.4 863.4,539.4 C864.2,539.4 864.9,540.0 865.7,540.1 C866.5,540.2 867.2,540.2 868.0,540.2 C868.8,540.2 869.5,540.2 870.3,540.1 C871.1,540.0 871.8,539.8 872.6,539.8 C873.4,539.8 874.1,540.1 874.9,540.2 C875.7,540.3 876.4,540.3 877.2,540.3 C878.0,540.3 878.9,540.1 879.7,540.3 C880.6,540.6 881.4,541.5 882.3,541.9 C883.1,542.2 884.0,542.2 884.8,542.3 C885.7,542.4 886.5,542.3 887.3,542.4 C888.2,542.5 889.1,542.8 889.9,542.8 C890.7,542.9 891.4,542.5 892.2,542.6 C892.9,542.7 893.7,543.3 894.5,543.3 C895.2,543.4 896.0,542.9 896.8,542.9 C897.5,542.9 898.3,543.3 899.1,543.3 C899.8,543.4 900.6,543.3 901.4,543.3 C902.1,543.2 902.9,542.9 903.7,542.9 C904.4,542.8 905.2,542.7 906.0,542.7 C906.8,542.8 907.5,543.0 908.3,543.0 C909.1,543.0 909.8,542.9 910.6,542.8 C911.4,542.7 912.1,542.4 912.9,542.4 C913.7,542.5 914.4,542.8 915.2,542.8 C915.9,542.9 916.7,542.5 917.4,542.6 C918.2,542.6 918.9,543.2 919.7,543.1 C920.4,543.1 921.1,542.3 921.9,542.2 C922.6,542.0 923.4,542.0 924.1,542.1 C924.9,542.2 925.6,542.7 926.4,542.8 C927.1,542.8 927.8,542.3 928.6,542.3 C929.3,542.3 930.1,542.6 930.8,542.6 C931.6,542.6 932.3,542.5 933.1,542.5 C933.8,542.4 934.5,542.2 935.3,542.3 C936.0,542.3 936.8,543.0 937.5,543.0 C938.3,543.0 939.0,542.1 939.8,542.0 C940.5,541.9 941.3,542.2 942.0,542.2 C942.7,542.2 943.5,541.9 944.2,541.9 C945.0,541.9 945.7,542.4 946.5,542.4 C947.2,542.4 948.0,542.0 948.7,541.9 C949.4,541.8 950.2,541.9 950.9,542.0 C951.7,542.0 952.4,542.0 953.2,542.1 C953.9,542.2 954.7,542.5 955.5,542.5 C956.2,542.4 957.0,542.0 957.8,542.0 C958.5,542.0 959.3,542.2 960.1,542.4 C960.8,542.5 961.6,542.9 962.4,542.8 C963.1,542.8 963.9,542.1 964.7,542.0 C965.4,541.8 966.2,541.9 967.0,542.0 C967.7,542.0 968.5,542.1 969.3,542.2 C970.0,542.4 970.8,542.9 971.6,543.0 C972.3,543.1 973.1,542.9 973.9,542.8 C974.6,542.8 975.4,542.5 976.2,542.5 C976.9,542.5 977.7,542.8 978.5,542.8 C979.2,542.9 980.0,542.7 980.8,542.6 C981.5,542.5 982.3,542.3 983.1,542.3 C983.9,542.3 984.6,542.6 985.4,542.6 C986.2,542.5 986.9,542.0 987.7,542.0 C988.5,542.0 989.2,542.6 990.0,542.7 C990.8,542.9 991.5,542.9 992.3,542.9 C993.1,542.9 993.8,543.0 994.6,542.9 C995.4,542.9 996.1,542.6 996.9,542.6 C997.7,542.6 998.4,542.9 999.2,542.8 C1000.0,542.6 1000.7,541.7 1001.5,541.6 C1002.3,541.5 1003.0,542.1 1003.8,542.1 C1004.6,542.1 1005.5,541.6 1006.3,541.6 C1007.2,541.7 1008.0,542.2 1008.9,542.3 C1009.7,542.3 1010.5,542.0 1011.4,541.8 C1012.2,541.7 1013.2,541.8 1013.9,541.3 C1015.7,540.1 1021.1,538.1 1021.8,534.5 C1024.0,523.1 1025.5,485.5 1027.3,472.7 C1028.0,467.3 1030.9,456.4 1032.7,458.2 C1034.5,460.0 1036.4,474.7 1038.2,483.6 C1040.0,492.7 1041.8,503.6 1043.6,512.7 C1045.4,521.7 1048.2,533.9 1049.1,538.2 C1049.4,519.4 1049.7,456.4 1050.9,425.5 C1051.9,399.9 1054.1,367.0 1056.4,352.7 C1057.2,347.5 1062.6,335.8 1064.7,340.0 C1066.8,344.2 1068.5,364.7 1069.1,378.2 C1070.3,406.4 1071.5,487.3 1072.0,509.1 C1073.9,509.4 1080.5,509.1 1083.6,510.9 C1086.8,512.7 1089.0,523.6 1090.9,520.0 C1093.3,515.5 1096.3,496.5 1098.2,483.6 C1100.9,464.8 1105.2,415.2 1107.3,407.3 C1109.4,399.4 1110.2,426.1 1110.9,436.4 C1112.8,462.2 1116.7,541.1 1118.7,562.3 C1118.8,563.7 1121.6,562.5 1122.5,563.6 C1123.7,565.1 1124.8,573.3 1126.3,571.2 C1127.7,569.1 1130.0,558.1 1131.3,550.9 C1133.0,541.7 1134.7,524.8 1136.4,515.5 C1137.7,508.3 1140.0,495.7 1141.5,495.3 C1142.9,494.8 1144.4,506.7 1145.3,513.0 C1146.5,522.7 1148.0,546.7 1149.1,553.5 C1149.2,554.4 1151.5,554.4 1151.6,553.5 C1152.6,545.5 1154.1,510.4 1155.4,505.4 C1156.6,500.3 1157.9,518.7 1159.2,523.1 C1160.1,526.3 1161.7,532.8 1163.0,532.0 C1164.2,531.1 1164.9,515.9 1166.8,518.0 C1168.7,520.1 1172.3,545.0 1174.4,544.6 C1176.5,544.2 1178.0,516.6 1179.4,515.5 C1180.9,514.5 1182.0,532.8 1183.2,538.3 C1184.1,542.0 1186.0,550.9 1187.0,548.4 C1188.1,545.9 1188.3,526.5 1189.6,523.1 C1190.4,520.8 1193.2,526.1 1194.6,528.2 C1196.1,530.3 1197.2,537.7 1198.4,535.8 C1199.7,533.9 1200.9,518.0 1202.2,516.8 C1203.5,515.5 1204.7,528.8 1206.0,528.2 C1207.3,527.5 1208.7,518.3 1209.8,513.0 C1211.1,507.1 1212.1,491.9 1213.6,492.7 C1215.1,493.6 1217.3,509.1 1218.7,518.0 C1220.1,527.3 1221.4,545.3 1222.5,548.4 C1223.5,551.6 1223.7,537.4 1225.0,537.0 C1226.3,536.6 1228.9,542.5 1230.1,545.9 C1231.5,550.3 1232.4,565.3 1233.9,563.6 C1235.3,561.9 1237.2,545.5 1238.9,535.8 C1240.8,525.0 1243.8,500.3 1245.3,499.1 C1246.7,497.8 1246.9,522.9 1247.8,528.2 C1248.0,529.4 1249.9,529.5 1250.3,530.7 C1252.0,534.9 1255.6,554.3 1257.9,553.5 C1260.2,552.6 1262.7,535.5 1264.2,525.6 C1265.9,514.5 1266.8,488.9 1268.0,486.4 C1269.3,483.9 1270.6,505.6 1271.8,510.4 C1272.4,512.6 1274.6,513.8 1275.6,515.5 C1276.7,517.2 1277.8,518.6 1278.2,520.6 C1279.4,527.5 1281.8,556.9 1283.2,557.3 C1284.7,557.7 1285.3,525.4 1287.0,523.1 C1288.7,520.8 1291.7,542.9 1293.4,543.4 C1295.0,543.8 1296.5,528.6 1297.2,525.6" fill="none" stroke="#3a3ab8" stroke-width="1.15" stroke-linejoin="round"/>
<path d="M391.3,662.3 C393.4,662.3 401.0,663.6 404.0,662.3 C406.9,661.1 405.9,655.5 409.1,654.7 C414.3,653.5 429.7,654.3 435.6,654.7 C438.9,655.0 441.5,656.1 444.5,657.3 C447.7,658.5 450.7,661.8 454.6,662.3 C460.7,663.2 475.5,662.8 481.2,662.3 C484.0,662.1 486.1,660.4 488.8,659.8 C491.5,659.2 495.3,660.0 497.7,658.5 C500.0,657.1 501.2,652.4 502.7,650.9 C503.7,650.0 505.1,649.7 506.5,649.7 C512.2,649.7 529.7,650.7 536.9,650.9 C541.3,651.1 545.1,651.5 549.6,651.5 C558.0,651.5 574.2,651.0 587.5,650.9 C602.3,650.9 625.5,650.7 638.2,650.9 C647.0,651.1 657.2,652.1 663.5,652.2 C667.9,652.3 671.9,651.7 676.1,651.5 C680.4,651.2 684.4,651.4 688.8,650.9 C693.6,650.4 701.4,649.0 705.0,648.4 C706.8,648.1 709.2,649.2 710.1,647.7 C711.8,644.9 713.6,637.5 715.2,632.0 C716.9,626.0 718.8,618.9 720.3,611.7 C721.7,604.5 722.8,594.4 724.1,588.9 C724.9,585.2 726.9,582.4 727.8,578.8 C729.1,574.2 730.4,567.0 731.6,561.1 C732.9,555.2 734.4,546.7 735.4,543.4 C735.8,542.2 736.7,541.0 738.0,540.8 C740.9,540.3 750.0,540.9 753.2,540.3 C754.9,540.0 756.3,538.6 757.0,537.0 C758.2,534.2 759.3,526.7 760.8,523.1 C762.0,520.1 764.7,518.5 765.8,515.5 C767.3,511.7 768.6,505.7 769.6,500.3 C770.7,494.8 771.5,486.8 772.2,482.6 C772.6,479.9 773.0,477.7 773.4,475.0 C773.9,471.9 774.0,467.8 775.0,464.0 C776.4,458.2 778.1,444.8 782.0,440.5 C785.9,436.3 793.7,438.6 798.4,438.2 C802.5,437.9 807.4,438.8 810.1,438.2 C812.1,437.8 814.0,436.6 814.8,434.7 C816.0,432.0 816.0,426.2 817.1,421.8 C818.3,417.3 820.2,410.5 821.8,407.8 C822.7,406.2 824.9,405.0 826.5,405.4 C828.1,405.8 829.6,408.4 831.2,410.1 C832.7,411.9 834.3,414.8 835.9,416.0 C837.2,417.0 838.9,416.7 840.5,417.1 C842.9,417.8 846.5,419.5 849.9,419.9 C854.6,420.5 862.4,420.3 868.7,420.6 C874.9,420.9 882.3,421.0 887.4,421.8 C891.6,422.5 895.2,424.5 899.1,425.3 C903.0,426.1 906.7,426.2 910.8,426.5 C915.9,426.9 925.7,426.3 929.6,427.7 C932.4,428.6 932.7,433.3 934.2,434.7 C935.5,435.8 937.2,435.9 938.9,435.9 C942.8,435.9 951.1,435.2 957.7,434.7 C964.7,434.1 976.0,432.5 981.1,432.3 C983.6,432.3 985.8,432.6 988.1,433.5 C991.2,434.7 995.5,437.8 999.8,439.4 C1004.1,440.9 1011.4,442.5 1013.9,442.9 C1014.3,443.0 1014.4,441.4 1014.5,441.8 C1015.9,445.0 1020.4,454.5 1021.8,461.8 C1023.6,471.2 1024.6,485.4 1025.5,498.2 C1026.4,513.0 1027.0,532.5 1027.5,550.9 C1028.3,578.1 1029.6,642.7 1030.1,661.1 C1034.3,661.3 1050.3,662.3 1055.4,662.3 C1057.2,662.3 1059.0,662.2 1060.4,661.1 C1062.1,659.8 1063.6,656.4 1065.5,654.7 C1067.4,653.1 1069.5,651.6 1071.8,650.9 C1074.2,650.3 1077.5,649.2 1079.4,650.9 C1081.5,652.8 1083.6,660.4 1084.5,662.3 C1119.9,662.3 1261.7,662.3 1297.2,662.3" fill="none" stroke="#30d830" stroke-width="1.2" stroke-linejoin="round"/>
<path d="M390.9,425.3 C392.2,429.8 396.5,443.2 399.1,452.3 C401.6,461.4 404.6,474.0 406.1,479.9 C406.7,482.6 406.7,485.1 407.8,487.7 C409.3,491.5 413.0,497.4 415.4,502.8 C418.1,509.2 421.3,519.7 424.2,525.6 C426.7,530.5 429.9,534.5 433.1,538.3 C436.3,542.1 440.3,546.3 443.2,548.4 C445.5,550.0 448.6,549.2 450.8,550.9 C453.8,553.3 458.2,559.4 460.9,562.3 C463.1,564.6 465.2,567.2 467.3,568.7 C469.2,570.0 471.8,569.6 473.6,571.2 C475.9,573.3 478.9,577.5 481.2,581.3 C483.7,585.5 486.5,592.9 488.8,596.5 C490.5,599.1 493.4,601.6 495.1,602.8 C496.2,603.7 497.6,604.7 498.9,604.1 C500.4,603.5 501.9,600.5 504.0,599.1 C506.1,597.6 509.7,595.7 511.6,595.3 C512.9,594.9 514.8,597.8 515.4,596.5 C517.1,592.9 519.6,578.0 521.7,573.7 C522.8,571.6 525.8,570.4 528.0,571.2 C531.0,572.3 535.8,578.0 539.4,580.1 C542.7,582.0 546.0,582.5 549.6,583.9 C553.4,585.3 558.0,588.5 562.2,588.9 C566.4,589.3 570.7,587.2 574.9,586.4 C579.1,585.5 583.3,584.3 587.5,583.9 C591.8,583.4 596.1,582.2 600.2,583.9 C604.4,585.5 609.5,592.9 612.8,594.0 C615.7,594.9 618.0,591.9 620.4,590.2 C623.8,587.9 629.3,581.1 633.1,580.1 C636.7,579.1 639.9,582.2 643.2,583.9 C646.6,585.5 650.0,589.6 653.4,590.2 C656.7,590.8 659.9,588.3 663.5,587.7 C667.3,587.0 671.9,587.0 676.1,586.4 C680.4,585.8 684.3,584.1 688.8,583.9 C693.6,583.6 701.4,585.1 705.0,585.1 C706.8,585.1 708.4,584.5 710.1,583.9 C711.8,583.2 713.7,581.3 715.2,581.3 C716.7,581.3 717.5,583.2 719.0,583.9 C720.5,584.5 722.6,585.5 724.1,585.1 C725.5,584.7 726.8,582.9 727.8,581.3 C729.1,579.4 730.9,576.6 731.6,573.7 C732.9,568.7 734.2,557.7 735.4,550.9 C736.6,544.7 737.9,539.4 739.2,533.2 C740.7,526.5 742.4,515.5 744.3,510.4 C745.5,507.2 748.7,504.7 750.6,502.8 C752.2,501.3 754.0,499.1 755.7,499.1 C757.4,499.1 759.5,501.8 760.8,502.8 C761.7,503.7 762.0,505.4 763.3,505.4 C765.0,505.4 768.1,502.8 770.9,502.8 C773.8,502.8 778.1,506.0 781.0,505.4 C784.0,504.7 787.0,500.0 788.6,499.1 C789.2,498.7 789.9,499.6 790.6,499.6 C791.3,499.6 791.9,498.7 792.6,498.9 C793.3,499.1 793.9,501.0 794.6,500.9 C795.3,500.9 795.9,498.7 796.6,498.6 C797.3,498.5 797.9,500.3 798.6,500.5 C799.3,500.7 799.9,500.1 800.6,499.8 C801.3,499.5 801.9,498.5 802.6,498.5 C803.3,498.6 803.9,500.4 804.6,500.3 C805.3,500.3 805.9,498.5 806.6,498.5 C807.3,498.4 807.9,500.0 808.6,500.1 C809.3,500.1 809.9,498.8 810.6,498.6 C811.3,498.4 811.9,498.4 812.6,498.7 C813.3,498.9 813.9,499.5 814.6,500.0 C815.3,500.5 815.9,501.8 816.6,501.6 C817.3,501.4 817.9,499.2 818.6,498.8 C819.2,498.4 820.0,498.9 820.6,499.2 C821.3,499.5 821.9,500.3 822.6,500.8 C823.3,501.3 823.9,502.1 824.6,502.1 C825.3,502.1 825.9,501.0 826.6,500.6 C827.3,500.3 827.9,499.6 828.6,499.9 C829.3,500.2 829.9,502.5 830.6,502.2 C831.3,502.0 831.9,498.6 832.6,498.5 C833.3,498.4 833.9,501.6 834.6,501.8 C835.3,501.9 835.9,500.0 836.6,499.5 C837.2,499.1 837.9,499.0 838.6,498.9 C839.3,498.8 839.9,498.7 840.6,498.8 C841.3,498.9 842.0,499.1 842.6,499.6 C843.3,500.0 843.9,501.7 844.6,501.6 C845.3,501.5 845.9,499.2 846.6,499.0 C847.3,498.9 847.9,500.3 848.6,500.6 C849.2,500.9 849.9,501.0 850.6,500.9 C851.3,500.7 851.9,499.9 852.6,499.8 C853.3,499.7 853.9,500.7 854.6,500.5 C855.3,500.3 855.9,498.9 856.6,498.6 C857.2,498.3 857.9,498.5 858.6,498.6 C859.3,498.7 860.0,498.8 860.6,499.1 C861.3,499.6 861.9,500.9 862.6,501.0 C863.3,501.2 863.9,500.3 864.6,500.0 C865.3,499.8 865.9,499.5 866.6,499.6 C867.3,499.7 867.9,500.6 868.6,500.7 C869.3,500.8 869.9,500.3 870.6,500.1 C871.3,499.9 871.9,499.3 872.6,499.5 C873.3,499.7 873.9,501.2 874.6,501.5 C875.3,501.8 876.0,501.5 876.6,501.1 C877.3,500.7 877.9,499.4 878.6,499.3 C879.3,499.2 879.9,500.4 880.6,500.6 C881.3,500.8 881.9,500.2 882.6,500.4 C883.3,500.6 883.9,501.7 884.6,501.8 C885.3,502.0 886.0,501.6 886.6,501.2 C887.3,500.8 887.9,499.3 888.6,499.5 C889.3,499.6 889.9,502.4 890.6,502.2 C891.3,502.1 891.9,499.2 892.6,498.8 C893.3,498.4 893.9,499.6 894.6,500.0 C895.3,500.4 895.9,501.5 896.6,501.3 C897.3,501.2 897.9,499.1 898.6,498.9 C899.3,498.7 899.9,500.3 900.6,500.3 C901.3,500.2 901.9,498.4 902.6,498.5 C903.3,498.6 903.9,500.5 904.6,501.0 C905.2,501.4 905.9,501.4 906.6,501.4 C907.3,501.3 907.9,500.5 908.6,500.6 C909.3,500.7 909.9,502.0 910.6,501.8 C911.3,501.6 911.9,499.7 912.6,499.6 C913.3,499.5 913.9,500.9 914.6,501.1 C915.3,501.3 915.9,500.8 916.6,500.7 C917.3,500.6 917.9,500.7 918.6,500.6 C919.3,500.5 919.9,500.0 920.6,500.1 C921.3,500.3 921.9,501.4 922.6,501.7 C923.3,502.0 923.9,502.3 924.6,502.1 C925.3,501.9 925.9,500.4 926.6,500.2 C927.3,500.0 927.9,501.2 928.6,501.0 C929.3,500.7 929.9,498.5 930.6,498.6 C931.3,498.6 931.9,500.7 932.6,501.1 C933.2,501.5 933.9,500.7 934.6,500.9 C935.3,501.1 935.9,502.2 936.6,502.3 C937.3,502.4 938.0,502.0 938.6,501.6 C939.3,501.1 939.9,499.7 940.6,499.5 C941.3,499.2 941.9,499.6 942.6,499.9 C943.3,500.1 943.9,501.2 944.6,501.0 C945.3,500.7 945.9,498.5 946.6,498.4 C947.3,498.3 947.9,500.1 948.6,500.2 C949.3,500.3 949.9,499.2 950.6,499.0 C951.3,498.8 951.9,498.9 952.6,498.8 C953.3,498.7 954.0,498.2 954.6,498.6 C955.3,499.0 955.9,501.3 956.6,501.4 C957.3,501.4 957.9,499.2 958.6,498.8 C959.2,498.5 959.9,499.1 960.6,499.3 C961.3,499.5 962.0,499.5 962.6,499.9 C963.3,500.3 963.9,502.0 964.6,501.8 C965.3,501.6 965.9,498.9 966.6,498.6 C967.3,498.4 967.9,499.8 968.6,500.1 C969.3,500.4 970.0,500.2 970.6,500.5 C971.3,500.8 971.9,501.7 972.6,501.8 C973.3,502.0 973.9,501.6 974.6,501.6 C975.3,501.6 976.0,502.1 976.6,501.8 C977.3,501.4 977.9,499.7 978.6,499.4 C979.3,499.1 979.9,499.9 980.6,500.0 C981.3,500.0 982.0,499.5 982.6,499.8 C983.3,500.1 983.9,501.5 984.6,501.9 C985.2,502.2 986.0,502.6 986.6,502.1 C987.3,501.7 987.9,499.4 988.6,498.9 C989.2,498.5 989.9,499.0 990.6,499.0 C991.3,499.1 991.9,499.2 992.6,499.2 C993.3,499.3 993.9,499.1 994.6,499.2 C995.3,499.4 995.9,500.0 996.6,500.3 C997.3,500.5 997.9,500.8 998.6,500.7 C999.3,500.5 999.9,499.8 1000.6,499.4 C1001.3,499.0 1001.9,498.2 1002.6,498.3 C1003.3,498.4 1003.9,499.7 1004.6,500.0 C1005.3,500.2 1005.9,499.7 1006.6,499.8 C1007.3,499.9 1008.0,500.2 1008.6,500.6 C1009.3,501.0 1009.9,502.0 1010.6,502.1 C1011.3,502.2 1011.9,501.4 1012.6,501.1 C1013.3,500.8 1013.9,500.4 1014.6,500.4 C1015.3,500.3 1015.9,500.7 1016.6,500.8 C1017.3,500.9 1018.0,501.4 1018.6,501.0 C1019.3,500.6 1019.5,498.9 1020.6,498.5 C1021.7,498.2 1023.6,498.4 1025.0,499.1 C1026.6,499.8 1029.3,500.8 1030.1,502.8 C1031.8,507.3 1033.4,518.0 1035.1,525.6 C1036.8,533.2 1038.5,541.2 1040.2,548.4 C1041.9,555.5 1043.6,561.9 1045.3,568.7 C1046.9,575.4 1048.6,583.0 1050.3,588.9 C1051.9,594.3 1053.3,600.3 1055.4,604.1 C1057.2,607.4 1061.1,611.3 1063.0,611.7 C1064.9,612.1 1065.9,608.7 1066.8,606.6 C1068.5,602.4 1071.2,592.7 1073.1,586.4 C1075.0,580.2 1076.5,573.1 1078.2,568.7 C1079.4,565.3 1081.3,560.7 1083.2,559.8 C1085.1,559.0 1088.0,561.5 1089.6,563.6 C1091.2,565.9 1091.9,570.6 1093.4,573.7 C1094.8,576.9 1096.6,579.5 1098.4,582.6 C1100.3,585.8 1102.8,591.2 1104.7,592.7 C1106.1,593.9 1108.4,593.0 1109.8,592.0 C1111.3,590.9 1112.1,588.2 1113.6,586.4 C1115.3,584.3 1117.8,580.6 1119.9,579.3 C1121.8,578.2 1124.2,578.1 1126.3,578.8 C1129.0,579.8 1132.6,584.8 1136.4,585.1 C1140.2,585.5 1146.1,580.9 1149.1,580.8 C1151.2,580.7 1152.0,584.2 1154.1,584.4 C1157.1,584.7 1163.0,582.8 1166.8,582.6 C1170.3,582.4 1173.5,583.6 1176.9,583.4 C1180.3,583.1 1183.4,581.3 1187.0,581.3 C1191.2,581.3 1198.0,582.7 1202.2,583.4 C1205.8,583.9 1209.0,585.5 1212.3,585.1 C1215.7,584.7 1219.1,581.8 1222.5,580.8 C1225.8,579.9 1229.2,578.6 1232.6,579.3 C1236.0,580.0 1239.3,584.8 1242.7,585.1 C1246.1,585.5 1250.3,582.2 1252.8,581.3 C1254.6,580.8 1256.2,579.5 1257.9,580.1 C1260.4,580.9 1264.7,586.0 1268.0,586.4 C1271.4,586.8 1275.6,583.5 1278.2,582.6 C1279.9,581.9 1281.5,580.7 1283.2,580.8 C1284.9,580.9 1286.6,583.3 1288.3,583.4 C1290.0,583.4 1291.9,581.2 1293.4,581.3 C1294.8,581.4 1296.5,583.4 1297.2,583.9" fill="none" stroke="#e82020" stroke-width="1.25" stroke-linejoin="round"/>
<path d="M390.9,244.5 C394.6,244.5 409.8,244.5 413.6,244.5 C415.1,246.4 420.5,251.4 422.5,256.2 C424.9,262.0 426.8,273.6 428.3,279.6 C429.5,284.1 430.7,288.3 431.8,292.5 C433.0,296.7 434.0,300.6 435.4,304.9 C436.9,309.9 438.9,317.6 441.2,322.3 C443.3,326.4 447.1,330.5 449.4,332.8 C451.1,334.5 453.9,334.3 455.3,336.3 C458.2,340.6 463.7,353.3 467.0,358.6 C469.3,362.2 472.9,364.2 475.2,367.9 C478.3,373.0 483.2,382.4 485.7,389.0 C488.1,395.3 488.8,403.7 490.4,407.8 C491.3,410.2 493.6,412.1 495.1,413.6 C496.4,414.9 497.6,417.2 499.3,416.7 C501.3,416.1 504.8,412.0 506.8,410.1 C508.5,408.5 510.1,406.0 511.5,405.4 C512.7,404.9 514.4,407.8 515.0,406.6 C517.0,402.5 521.1,385.7 523.2,380.8 C524.0,378.9 525.9,377.0 527.9,377.3 C530.2,377.7 533.9,381.3 537.3,383.2 C540.8,385.1 544.8,387.1 549.0,389.0 C553.3,391.0 558.3,393.9 563.0,394.9 C567.7,395.8 573.4,395.8 577.1,394.9 C580.5,394.0 582.2,390.1 585.3,389.0 C588.4,388.0 592.7,388.4 595.8,388.5 C598.7,388.7 601.8,388.2 604.0,390.2 C606.8,392.6 609.9,401.0 612.2,403.1 C613.8,404.4 616.6,404.1 618.1,402.6 C620.0,400.6 621.6,394.2 623.9,391.4 C626.2,388.6 629.4,386.1 632.1,385.5 C634.9,384.9 637.8,386.5 640.3,387.8 C642.9,389.2 644.6,392.3 647.4,393.7 C650.1,395.1 653.3,396.2 656.7,396.0 C661.0,395.8 668.0,393.7 673.1,392.5 C678.1,391.4 682.1,389.4 687.2,389.0 C692.5,388.6 701.3,389.9 705.0,390.2 C706.5,390.3 707.9,391.3 709.4,390.9 C711.1,390.4 713.3,386.9 715.2,387.1 C717.2,387.4 719.3,391.2 721.1,392.5 C722.6,393.6 724.2,395.3 725.8,394.9 C727.3,394.5 729.5,392.3 730.5,390.2 C732.4,385.7 735.1,374.2 737.5,367.9 C739.5,362.4 741.8,356.1 744.5,352.7 C746.9,349.7 751.7,347.9 753.9,347.3 C755.2,347.0 756.5,348.1 757.4,349.2 C759.7,352.2 765.0,360.3 767.9,365.6 C770.8,370.7 772.2,377.1 775.0,380.8 C777.4,384.1 782.4,386.6 784.3,387.8 C785.0,388.3 785.9,388.1 786.7,388.3 C787.5,388.4 788.2,388.6 789.0,388.7 C789.8,388.9 790.6,388.9 791.4,389.1 C792.1,389.2 792.9,389.5 793.7,389.6 C794.5,389.6 795.3,389.6 796.0,389.5 C796.8,389.5 797.6,389.3 798.4,389.5 C799.2,389.6 799.9,390.4 800.7,390.4 C801.5,390.4 802.3,389.5 803.1,389.4 C803.8,389.4 804.6,390.1 805.4,390.4 C806.2,390.7 807.0,391.2 807.8,391.4 C808.5,391.5 809.3,391.3 810.1,391.3 C810.9,391.3 811.7,391.1 812.4,391.4 C813.2,391.7 814.0,392.8 814.8,393.1 C815.5,393.4 816.4,392.9 817.1,393.2 C817.9,393.4 818.7,394.3 819.5,394.8 C820.2,395.3 821.0,395.9 821.8,396.0 C822.6,396.2 823.4,395.7 824.2,395.7 C824.9,395.8 825.7,396.1 826.5,396.2 C827.3,396.3 828.1,396.4 828.8,396.3 C829.6,396.2 830.4,395.7 831.2,395.6 C832.0,395.5 832.7,395.9 833.5,395.9 C834.3,396.0 835.1,395.9 835.9,396.1 C836.6,396.3 837.4,397.0 838.2,397.0 C839.0,397.1 839.8,396.5 840.5,396.5 C841.3,396.5 842.1,397.1 842.9,397.0 C843.7,397.0 844.5,396.3 845.2,396.3 C846.0,396.4 846.8,397.3 847.6,397.3 C848.4,397.4 849.1,396.6 849.9,396.6 C850.7,396.5 851.5,397.0 852.3,397.2 C853.0,397.4 853.8,397.8 854.6,397.8 C855.4,397.9 856.2,397.6 856.9,397.6 C857.7,397.6 858.5,397.5 859.3,397.8 C860.1,398.1 860.8,399.3 861.6,399.5 C862.4,399.7 863.2,399.0 864.0,399.0 C864.8,399.0 865.5,399.2 866.3,399.4 C867.1,399.6 867.9,400.0 868.7,400.3 C869.4,400.6 870.2,401.0 871.0,401.2 C871.8,401.4 872.6,401.4 873.3,401.4 C874.1,401.3 874.9,400.7 875.7,400.8 C876.5,401.0 877.2,401.9 878.0,402.1 C878.8,402.2 879.6,401.7 880.4,401.8 C881.2,401.8 881.9,402.2 882.7,402.3 C883.5,402.3 884.3,401.8 885.1,401.9 C885.8,402.0 886.6,402.4 887.4,402.6 C888.2,402.8 889.0,403.2 889.7,403.2 C890.5,403.2 891.3,402.8 892.1,402.8 C892.9,402.8 893.6,403.1 894.4,403.2 C895.2,403.2 896.0,403.2 896.8,403.1 C897.5,402.9 898.3,402.3 899.1,402.2 C899.9,402.1 900.7,402.3 901.5,402.3 C902.2,402.2 903.0,402.0 903.8,402.0 C904.6,401.9 905.4,401.9 906.1,401.9 C906.9,401.9 907.7,401.7 908.5,401.8 C909.3,401.9 910.0,402.3 910.8,402.4 C911.6,402.4 912.4,402.0 913.2,402.0 C913.9,402.0 914.7,402.5 915.5,402.4 C916.3,402.3 917.1,401.5 917.8,401.5 C918.6,401.5 919.4,402.4 920.2,402.4 C921.0,402.5 921.8,402.0 922.5,401.9 C923.3,401.8 924.1,401.7 924.9,401.8 C925.7,401.9 926.4,402.5 927.2,402.5 C928.0,402.5 928.8,402.1 929.6,402.0 C930.3,401.8 931.1,401.7 931.9,401.7 C932.7,401.7 933.5,401.8 934.2,401.9 C935.0,401.9 935.8,401.9 936.6,402.0 C937.4,402.1 938.2,402.5 938.9,402.4 C939.7,402.4 940.5,401.5 941.3,401.6 C942.1,401.7 942.8,403.0 943.6,403.0 C944.4,403.1 945.2,401.8 946.0,401.8 C946.7,401.8 947.5,402.7 948.3,402.9 C949.1,403.2 949.9,403.3 950.6,403.2 C951.4,403.1 952.2,402.1 953.0,402.2 C953.8,402.2 954.5,403.2 955.3,403.4 C956.1,403.5 956.9,403.1 957.7,403.1 C958.5,403.0 959.2,402.9 960.0,402.9 C960.8,403.0 961.6,403.4 962.4,403.3 C963.1,403.2 963.9,402.7 964.7,402.6 C965.5,402.5 966.3,402.6 967.0,402.7 C967.8,402.7 968.6,402.7 969.4,402.9 C970.2,403.1 970.9,404.0 971.7,404.1 C972.5,404.1 973.3,403.1 974.1,403.1 C974.8,403.0 975.6,403.4 976.4,403.5 C977.2,403.7 978.0,403.8 978.8,403.8 C979.5,403.9 980.3,404.0 981.1,404.0 C981.9,404.0 982.7,404.1 983.4,404.0 C984.2,403.8 985.0,403.2 985.8,403.1 C986.6,402.9 987.3,403.0 988.1,403.0 C988.9,403.1 989.7,403.1 990.5,403.2 C991.2,403.3 992.0,403.5 992.8,403.5 C993.6,403.5 994.4,403.3 995.2,403.1 C995.9,402.9 996.7,402.4 997.5,402.4 C998.3,402.4 999.1,403.0 999.8,403.1 C1000.6,403.2 1001.4,403.1 1002.2,403.0 C1003.0,403.0 1003.7,403.2 1004.5,403.0 C1005.3,402.8 1006.1,401.7 1006.9,401.7 C1007.6,401.7 1008.4,402.9 1009.2,402.8 C1010.0,402.8 1010.8,401.6 1011.5,401.5 C1012.3,401.3 1013.4,402.1 1013.9,401.9 C1014.4,401.7 1014.1,400.5 1014.5,400.0 C1016.2,398.2 1022.3,395.2 1023.6,390.9 C1026.1,383.0 1027.2,366.1 1029.1,352.7 C1031.0,338.8 1033.8,313.9 1035.3,307.3 C1035.8,305.2 1037.8,310.6 1038.2,312.7 C1039.6,320.3 1041.5,339.4 1043.6,352.7 C1045.8,366.1 1048.5,380.9 1050.9,392.7 C1053.1,403.6 1056.1,417.9 1058.2,423.6 C1059.0,425.8 1061.9,428.7 1063.6,427.3 C1065.5,425.8 1067.7,419.2 1069.1,414.5 C1071.2,407.6 1073.3,393.9 1076.4,385.5 C1079.2,377.4 1083.9,364.8 1087.3,363.6 C1090.6,362.4 1093.4,372.9 1096.4,378.2 C1099.4,383.6 1103.0,392.7 1105.5,396.4 C1106.7,398.3 1109.1,401.2 1110.9,400.0 C1112.7,398.8 1113.9,391.5 1116.4,389.1 C1118.8,386.7 1122.3,385.5 1125.5,385.5 C1128.6,385.4 1133.1,388.3 1135.1,389.0 C1135.9,389.3 1136.7,389.1 1137.4,389.5 C1138.2,389.8 1139.0,390.8 1139.8,391.1 C1140.5,391.4 1141.4,391.6 1142.1,391.4 C1142.9,391.1 1143.7,389.8 1144.5,389.3 C1145.2,388.9 1146.0,388.9 1146.8,388.5 C1147.6,388.0 1148.3,386.8 1149.2,386.7 C1150.0,386.6 1151.1,387.4 1152.1,387.9 C1153.1,388.5 1154.1,390.0 1155.0,390.2 C1155.9,390.4 1156.8,389.4 1157.6,389.3 C1158.5,389.2 1159.4,389.8 1160.3,389.6 C1161.2,389.4 1162.0,388.4 1162.9,388.1 C1163.8,387.8 1164.7,387.9 1165.5,387.8 C1166.4,387.8 1167.1,387.8 1167.9,387.7 C1168.7,387.6 1169.5,387.3 1170.2,387.2 C1171.0,387.1 1171.8,387.0 1172.6,386.9 C1173.4,386.8 1174.1,386.7 1174.9,386.7 C1175.7,386.7 1176.5,386.9 1177.3,387.0 C1178.0,387.0 1178.8,386.7 1179.6,386.9 C1180.4,387.1 1181.2,387.8 1181.9,387.9 C1182.7,388.1 1183.5,387.9 1184.3,387.8 C1185.1,387.7 1185.8,387.4 1186.6,387.4 C1187.4,387.3 1188.2,387.5 1189.0,387.5 C1189.8,387.5 1190.5,387.3 1191.3,387.3 C1192.1,387.3 1192.9,387.5 1193.7,387.6 C1194.4,387.6 1195.2,387.7 1196.0,387.7 C1196.8,387.8 1197.6,387.6 1198.3,387.8 C1199.1,388.0 1199.9,388.7 1200.7,388.9 C1201.5,389.1 1202.2,388.8 1203.0,388.9 C1203.8,388.9 1204.6,389.0 1205.4,389.1 C1206.2,389.3 1206.9,389.5 1207.7,389.9 C1208.5,390.3 1209.3,391.1 1210.1,391.4 C1210.8,391.6 1211.6,391.6 1212.4,391.4 C1213.2,391.1 1214.0,390.2 1214.7,389.9 C1215.5,389.6 1216.3,389.9 1217.1,389.6 C1217.9,389.4 1218.6,388.7 1219.4,388.4 C1220.2,388.1 1221.0,388.1 1221.8,387.8 C1222.5,387.5 1223.3,387.0 1224.1,386.7 C1224.9,386.4 1225.7,386.1 1226.5,386.0 C1227.2,385.9 1228.0,386.1 1228.8,386.0 C1229.6,385.8 1230.4,385.4 1231.1,385.3 C1231.9,385.1 1232.7,385.1 1233.5,385.0 C1234.3,384.8 1235.0,384.1 1235.8,384.3 C1236.6,384.5 1237.4,385.8 1238.2,386.3 C1238.9,386.8 1239.7,387.0 1240.5,387.4 C1241.3,387.7 1242.1,387.8 1242.8,388.3 C1243.6,388.8 1244.4,390.1 1245.2,390.2 C1246.0,390.3 1246.8,389.1 1247.5,388.9 C1248.3,388.7 1249.1,389.3 1249.9,389.2 C1250.7,389.0 1251.4,388.2 1252.2,387.8 C1253.0,387.4 1253.8,386.9 1254.6,386.7 C1255.3,386.5 1256.1,387.0 1256.9,386.8 C1257.7,386.6 1258.5,385.5 1259.2,385.5 C1260.0,385.5 1260.8,386.5 1261.6,387.1 C1262.4,387.6 1263.2,388.2 1263.9,388.7 C1264.7,389.3 1265.5,389.9 1266.3,390.3 C1267.1,390.8 1267.8,391.4 1268.6,391.4 C1269.4,391.3 1270.2,390.5 1271.0,390.1 C1271.7,389.8 1272.5,389.4 1273.3,389.2 C1274.1,389.0 1274.9,389.2 1275.6,388.9 C1276.4,388.5 1277.2,387.4 1278.0,387.0 C1278.7,386.7 1279.5,387.0 1280.3,386.8 C1281.1,386.5 1281.9,385.7 1282.7,385.5 C1283.5,385.3 1284.2,385.5 1285.0,385.8 C1285.8,386.1 1286.6,386.9 1287.4,387.3 C1288.1,387.6 1288.9,387.7 1289.7,387.8 C1290.5,387.9 1291.3,387.8 1292.0,387.9 C1292.8,387.9 1293.6,388.0 1294.4,387.9 C1295.2,387.8 1296.3,387.3 1296.7,387.1" fill="none" stroke="#e4e050" stroke-width="1.2" stroke-linejoin="round"/>
<path d="M393.8,129.8 L390.9,191.5" fill="none" stroke="#40c8d4" stroke-width="1.2" stroke-linejoin="round"/>
<path d="M469.3,129.2 C469.9,138.3 471.9,167.9 472.8,183.6 C473.7,197.5 474.0,212.1 475.2,223.4 C476.2,233.3 478.5,241.6 479.9,251.5 C481.8,265.1 484.4,291.0 486.9,304.9 C488.9,315.7 492.8,325.4 495.1,335.1 C497.4,344.9 499.0,354.3 501.0,363.2 C502.9,372.2 504.9,381.6 506.8,389.0 C508.6,395.7 511.1,401.9 512.7,407.8 C514.2,413.4 515.1,418.4 516.2,424.2 C517.3,430.4 518.1,439.4 519.7,445.2 C521.1,450.4 523.6,456.2 525.5,459.3 C526.9,461.5 530.1,461.7 531.4,464.0 C533.4,467.4 536.1,476.6 537.3,479.9 C537.7,481.2 537.6,485.0 538.2,483.9 C538.8,482.8 539.1,476.8 540.8,473.3 C542.6,469.6 546.0,465.5 549.0,461.6 C551.9,457.7 555.6,453.6 558.3,449.9 C561.0,446.3 563.0,440.5 565.4,439.4 C567.7,438.2 569.7,442.3 572.4,442.9 C575.1,443.5 579.0,442.5 581.8,442.9 C584.3,443.3 586.5,445.2 588.8,445.2 C591.1,445.2 593.5,441.9 595.8,442.9 C598.2,443.9 600.3,451.1 602.8,451.1 C605.4,451.1 608.3,443.3 611.0,442.9 C613.8,442.5 616.5,448.7 619.2,448.7 C622.0,448.7 624.5,441.7 627.4,442.9 C630.4,444.1 634.3,454.2 636.8,455.8 C638.9,457.0 640.4,453.0 642.7,452.3 C645.6,451.3 650.9,450.9 654.4,449.9 C657.8,449.0 661.0,446.6 663.8,446.4 C666.3,446.2 668.3,449.5 670.8,448.7 C673.9,447.8 678.8,443.1 682.5,440.5 C686.2,438.0 689.3,433.5 693.0,433.5 C696.8,433.5 701.9,437.8 705.0,440.5 C708.0,443.2 709.1,446.9 711.7,449.9 C714.4,453.0 718.5,455.8 721.1,459.3 C723.6,462.8 725.4,467.7 726.9,471.0 C728.2,473.7 729.4,477.5 730.4,478.8 C730.9,479.5 732.7,479.6 732.9,478.8 C734.3,474.0 737.1,460.1 738.7,449.9 C740.2,439.6 740.8,428.4 742.2,417.1 C743.5,405.8 745.6,394.3 746.8,382.0 C748.2,368.3 749.3,348.8 750.4,335.1 C751.3,322.8 752.5,311.6 753.4,300.0 C754.3,288.4 754.9,275.2 755.5,265.5 C756.1,257.3 756.5,250.3 757.4,242.1 C758.7,230.4 761.5,210.9 763.2,195.3 C765.0,179.7 766.9,159.4 767.9,148.4 C768.6,141.9 769.3,132.8 769.6,129.7" fill="none" stroke="#40c8d4" stroke-width="1.2" stroke-linejoin="round"/>
<path d="M1039.5,129.7 C1039.8,138.7 1040.7,166.8 1041.4,183.6 C1042.1,200.0 1042.8,216.7 1043.7,230.4 C1044.6,242.7 1046.2,253.8 1047.3,265.5 C1048.3,277.3 1049.3,295.8 1050.3,300.7 C1050.7,302.9 1052.1,295.8 1053.1,294.8 C1054.0,294.0 1056.2,293.7 1056.6,294.8 C1058.1,298.4 1060.4,308.7 1061.8,316.4 C1063.6,326.0 1066.2,339.9 1067.3,352.7 C1068.8,370.9 1069.4,404.2 1070.9,425.5 C1072.3,444.6 1074.2,465.5 1076.4,480.0 C1078.1,491.6 1081.5,505.8 1083.6,512.7 C1084.7,516.3 1087.0,522.4 1089.1,521.8 C1091.2,521.2 1094.8,514.0 1096.4,509.1 C1099.1,500.3 1102.4,480.0 1105.5,469.1 C1108.0,460.0 1111.8,447.6 1114.5,443.6 C1116.0,441.5 1120.1,443.5 1121.8,445.5 C1124.5,448.5 1127.9,460.3 1130.9,461.8 C1133.9,463.3 1137.1,457.4 1140.0,454.5 C1143.6,451.0 1150.1,442.8 1152.7,440.5 C1153.5,439.9 1154.6,440.9 1155.6,441.1 C1156.6,441.3 1157.6,441.8 1158.5,441.7 C1159.4,441.6 1160.1,440.9 1160.9,440.4 C1161.6,439.9 1162.4,439.3 1163.2,438.9 C1164.0,438.6 1164.7,437.9 1165.5,438.2 C1166.4,438.5 1167.4,440.0 1168.3,440.6 C1169.1,441.1 1170.2,441.0 1171.0,441.5 C1171.9,442.1 1172.8,444.0 1173.7,444.1 C1174.7,444.2 1175.6,442.7 1176.5,442.1 C1177.4,441.5 1178.3,441.3 1179.2,440.6 C1180.1,440.0 1181.1,438.7 1181.9,438.2 C1182.7,437.8 1183.5,437.7 1184.3,437.7 C1185.1,437.7 1185.8,438.2 1186.6,438.3 C1187.4,438.4 1188.2,438.4 1189.0,438.3 C1189.8,438.2 1190.5,437.7 1191.3,437.7 C1192.1,437.6 1192.9,438.4 1193.7,438.2 C1194.4,438.0 1195.2,437.0 1196.0,436.6 C1196.8,436.1 1197.6,436.0 1198.3,435.5 C1199.1,435.0 1199.9,434.3 1200.7,433.8 C1201.5,433.2 1202.2,432.3 1203.0,432.3 C1203.8,432.4 1204.6,433.4 1205.4,433.8 C1206.2,434.2 1206.9,434.9 1207.7,434.7 C1208.5,434.5 1209.3,433.2 1210.1,432.5 C1210.8,431.9 1211.6,431.5 1212.4,430.9 C1213.2,430.3 1214.0,429.5 1214.7,429.0 C1215.5,428.4 1216.3,427.7 1217.1,427.7 C1217.9,427.6 1218.6,428.1 1219.4,428.5 C1220.2,428.8 1221.0,429.5 1221.8,429.7 C1222.5,430.0 1223.3,430.0 1224.1,430.0 C1224.9,430.0 1225.7,429.7 1226.5,429.5 C1227.2,429.3 1228.0,428.6 1228.8,428.8 C1229.6,429.0 1230.4,430.2 1231.1,430.7 C1231.9,431.2 1232.7,431.4 1233.5,431.8 C1234.3,432.3 1235.0,433.4 1235.8,433.5 C1236.6,433.7 1237.4,433.1 1238.2,432.6 C1238.9,432.2 1239.7,431.1 1240.5,430.7 C1241.3,430.3 1242.1,430.0 1242.8,430.0 C1243.6,430.0 1244.4,430.2 1245.2,430.5 C1246.0,430.8 1246.8,431.5 1247.5,431.8 C1248.3,432.1 1249.1,432.3 1249.9,432.3 C1250.7,432.4 1251.4,432.2 1252.2,432.0 C1253.0,431.8 1253.8,431.4 1254.6,431.1 C1255.3,430.8 1256.1,430.3 1256.9,430.1 C1257.7,429.9 1258.5,430.1 1259.2,430.0 C1260.0,429.9 1260.8,429.8 1261.6,429.7 C1262.4,429.7 1263.2,429.6 1263.9,429.7 C1264.7,429.7 1265.5,430.3 1266.3,430.0 C1267.1,429.7 1267.8,428.4 1268.6,427.8 C1269.4,427.2 1270.2,427.1 1271.0,426.5 C1271.7,425.9 1272.5,424.9 1273.3,424.2 C1274.1,423.4 1274.9,422.4 1275.6,421.8 C1276.4,421.3 1277.3,421.3 1278.0,420.7 C1278.8,420.1 1279.5,418.5 1280.3,418.3 C1281.1,418.1 1281.9,419.1 1282.7,419.3 C1283.5,419.5 1284.2,419.3 1285.0,419.5 C1285.8,419.6 1286.6,419.7 1287.4,420.1 C1288.1,420.5 1288.9,421.8 1289.7,421.8 C1290.5,421.8 1291.3,420.2 1292.0,419.9 C1292.8,419.7 1293.6,420.3 1294.4,420.5 C1295.2,420.7 1296.3,421.2 1296.7,421.3" fill="none" stroke="#40c8d4" stroke-width="1.2" stroke-linejoin="round"/>
<line x1="391" y1="424.3" x2="1343" y2="424.3" stroke="#ffffff" stroke-width="1.25"/>
</svg>
<div id="status">
 <span style="left:2.5px">Ready</span>
 <span style="left:389px">Zoom: 0 to 536 [537]</span>
 <i style="left:566px"></i><span style="left:571px">Start Time: 04:34:31.393</span>
 <i style="left:703px"></i><span style="left:708px">Production Date: 00000000</span>
 <i style="left:858px"></i><span style="left:863px">Firmware:03001100</span>
 <i style="left:1001px"></i>
</div>
</body></html>
